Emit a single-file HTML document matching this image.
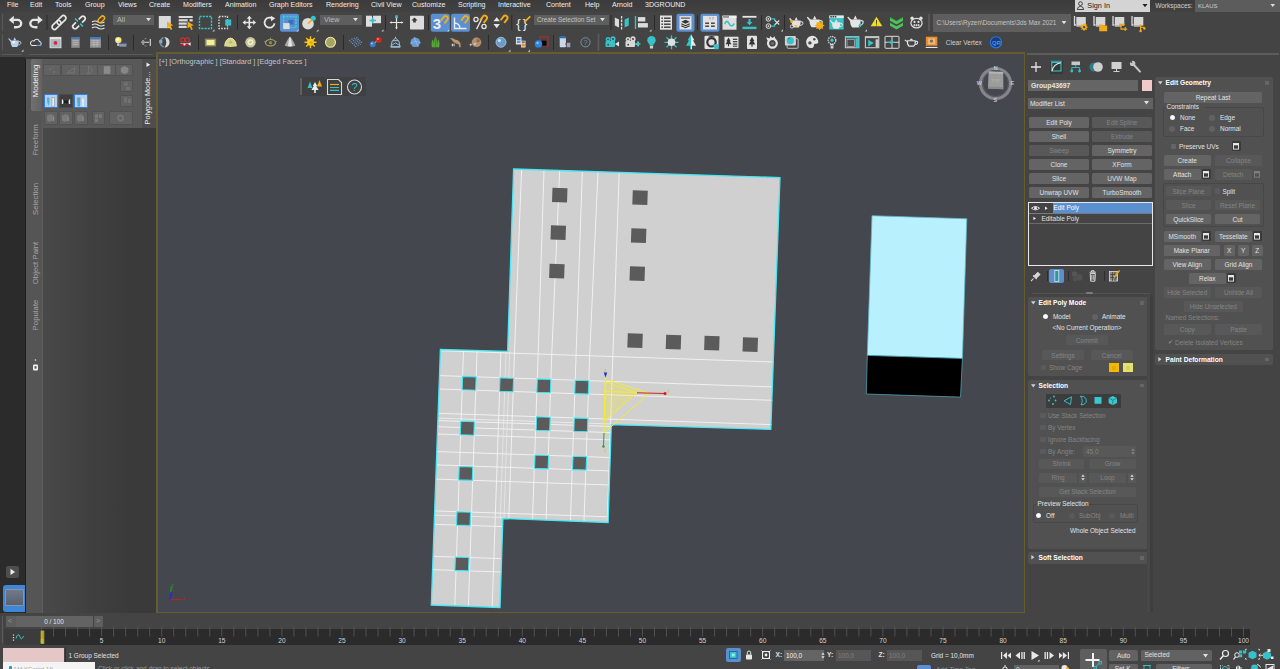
<!DOCTYPE html>
<html><head><meta charset="utf-8"><title>3ds Max</title>
<style>
html,body{margin:0;padding:0;}
body{width:1280px;height:669px;overflow:hidden;background:#444444;position:relative;font-family:"Liberation Sans",sans-serif;}
.a{position:absolute;box-sizing:border-box;}
.t{white-space:nowrap;overflow:visible;}
svg{position:absolute;overflow:visible;}
</style></head><body>

<div class="a" style="left:0px;top:0px;width:1280px;height:11.6px;background:linear-gradient(#3b3b3b,#414141);"></div>
<div class="a" style="left:0px;top:11.6px;width:1280px;height:1px;background:#2c2c2c;"></div>
<div class="a t" style="top:-0.8px;height:12px;line-height:12px;font-size:7.7px;color:#eeeeee;left:6.5px;transform:scaleX(0.92);transform-origin:left center;">File</div>
<div class="a t" style="top:-0.8px;height:12px;line-height:12px;font-size:7.7px;color:#eeeeee;left:29.5px;transform:scaleX(0.92);transform-origin:left center;">Edit</div>
<div class="a t" style="top:-0.8px;height:12px;line-height:12px;font-size:7.7px;color:#eeeeee;left:54.5px;transform:scaleX(0.92);transform-origin:left center;">Tools</div>
<div class="a t" style="top:-0.8px;height:12px;line-height:12px;font-size:7.7px;color:#eeeeee;left:84.5px;transform:scaleX(0.92);transform-origin:left center;">Group</div>
<div class="a t" style="top:-0.8px;height:12px;line-height:12px;font-size:7.7px;color:#eeeeee;left:117.5px;transform:scaleX(0.92);transform-origin:left center;">Views</div>
<div class="a t" style="top:-0.8px;height:12px;line-height:12px;font-size:7.7px;color:#eeeeee;left:148.5px;transform:scaleX(0.92);transform-origin:left center;">Create</div>
<div class="a t" style="top:-0.8px;height:12px;line-height:12px;font-size:7.7px;color:#eeeeee;left:182.5px;transform:scaleX(0.92);transform-origin:left center;">Modifiers</div>
<div class="a t" style="top:-0.8px;height:12px;line-height:12px;font-size:7.7px;color:#eeeeee;left:224.5px;transform:scaleX(0.92);transform-origin:left center;">Animation</div>
<div class="a t" style="top:-0.8px;height:12px;line-height:12px;font-size:7.7px;color:#eeeeee;left:268.5px;transform:scaleX(0.92);transform-origin:left center;">Graph Editors</div>
<div class="a t" style="top:-0.8px;height:12px;line-height:12px;font-size:7.7px;color:#eeeeee;left:325.5px;transform:scaleX(0.92);transform-origin:left center;">Rendering</div>
<div class="a t" style="top:-0.8px;height:12px;line-height:12px;font-size:7.7px;color:#eeeeee;left:370.5px;transform:scaleX(0.92);transform-origin:left center;">Civil View</div>
<div class="a t" style="top:-0.8px;height:12px;line-height:12px;font-size:7.7px;color:#eeeeee;left:411.5px;transform:scaleX(0.92);transform-origin:left center;">Customize</div>
<div class="a t" style="top:-0.8px;height:12px;line-height:12px;font-size:7.7px;color:#eeeeee;left:457.5px;transform:scaleX(0.92);transform-origin:left center;">Scripting</div>
<div class="a t" style="top:-0.8px;height:12px;line-height:12px;font-size:7.7px;color:#eeeeee;left:497.5px;transform:scaleX(0.92);transform-origin:left center;">Interactive</div>
<div class="a t" style="top:-0.8px;height:12px;line-height:12px;font-size:7.7px;color:#eeeeee;left:545.5px;transform:scaleX(0.92);transform-origin:left center;">Content</div>
<div class="a t" style="top:-0.8px;height:12px;line-height:12px;font-size:7.7px;color:#eeeeee;left:584.5px;transform:scaleX(0.92);transform-origin:left center;">Help</div>
<div class="a t" style="top:-0.8px;height:12px;line-height:12px;font-size:7.7px;color:#eeeeee;left:611.5px;transform:scaleX(0.92);transform-origin:left center;">Arnold</div>
<div class="a t" style="top:-0.8px;height:12px;line-height:12px;font-size:7.7px;color:#eeeeee;left:644.5px;transform:scaleX(0.92);transform-origin:left center;">3DGROUND</div>
<div class="a" style="left:1075px;top:0px;width:75px;height:11.6px;background:#d4d4d4;"></div>
<div class="a t" style="top:-0.3px;height:12px;line-height:12px;font-size:7.3px;color:#222;left:1087.3px;">Sign In</div>
<div class="a t" style="top:-0.2px;height:12px;line-height:12px;font-size:6.5px;color:#cfcfcf;left:1155.2px;">Workspaces:</div>
<div class="a" style="left:1195px;top:0px;width:85px;height:11.6px;background:#5c5c5c;"></div>
<div class="a t" style="top:-0.2px;height:12px;line-height:12px;font-size:5.9px;color:#cccccc;left:1198px;">KLAUS</div>
<div class="a" style="left:0px;top:12px;width:1280px;height:41px;background:#444444;"></div>
<div class="a" style="left:2px;top:14px;width:1px;height:17px;background:#5a5a5a;"></div>
<div class="a" style="left:2px;top:34px;width:1px;height:16px;background:#5a5a5a;"></div>
<div class="a" style="left:2px;top:53.6px;width:20px;height:1.6px;background:#5a5a5a;"></div>
<div class="a" style="left:29px;top:53.6px;width:124px;height:1.6px;background:#5a5a5a;"></div>
<div class="a" style="left:1027px;top:53px;width:252px;height:1.6px;background:#5c5c5c;"></div>
<div class="a" style="left:113px;top:14.5px;width:41px;height:10.5px;background:#5e5e5e;"></div>
<div class="a t" style="top:14.4px;height:12px;line-height:12px;font-size:7.2px;color:#bdbdbd;left:117px;">All</div>
<div class="a" style="left:320px;top:14.5px;width:42px;height:10.5px;background:#5e5e5e;"></div>
<div class="a t" style="top:14.4px;height:12px;line-height:12px;font-size:7.2px;color:#bdbdbd;left:324px;">View</div>
<div class="a" style="left:534px;top:14.5px;width:74.5px;height:10.5px;background:#5e5e5e;"></div>
<div class="a t" style="top:14.4px;height:12px;line-height:12px;font-size:6.4px;color:#c4c4c4;left:537px;">Create Selection Set</div>
<div class="a" style="left:933px;top:13.5px;width:137.5px;height:18px;background:#5e5e5e;"></div>
<div class="a t" style="top:17.1px;height:12px;line-height:12px;font-size:6.35px;color:#c4c4c4;left:936.5px;">C:\Users\Ryzen\Documents\3ds Max 2021</div>
<div class="a t" style="top:37.3px;height:12px;line-height:12px;font-size:6.55px;color:#d0d0d0;left:945.8px;">Clear Vertex</div>
<svg class="a" style="left:0;top:0" width="1280" height="56" viewBox="0 0 1280 56"><g transform="translate(16,22.5)"><path d="M-2.6 -2.6 H1.6 A3.6 3.6 0 0 1 1.6 4.6 H-0.8 V6" fill="none" stroke="#e6e6e6" stroke-width="2.3"/><polygon points="-7.2,-2.6 -2.2,-6.8 -2.2,1.6" fill="#e6e6e6"/></g><g transform="translate(35.5,22.5)"><g transform="scale(-1,1)"><path d="M-2.6 -2.6 H1.6 A3.6 3.6 0 0 1 1.6 4.6 H-0.8 V6" fill="none" stroke="#e6e6e6" stroke-width="2.3"/><polygon points="-7.2,-2.6 -2.2,-6.8 -2.2,1.6" fill="#e6e6e6"/></g></g><rect x="46.5" y="15.0" width="1" height="15" fill="#2a2a2a"/><g transform="translate(59,22.5)"><g transform="rotate(-45)" fill="none" stroke="#e6e6e6" stroke-width="1.7"><rect x="-8.8" y="-2.5" width="10.6" height="5" rx="2.5"/><rect x="-1.8" y="-2.5" width="10.6" height="5" rx="2.5"/></g></g><g transform="translate(79,22.5)"><g transform="rotate(-45)"><g fill="none" stroke="#e6e6e6" stroke-width="1.7"><path d="M-2 -2.3 H-5.6 A2.3 2.3 0 0 0 -5.6 2.3 H-2"/><path d="M2 -2.3 H5.6 A2.3 2.3 0 0 1 5.6 2.3 H2"/></g><path d="M0 -5.6 V-1.6 M0 1.6 V5.6" stroke="#36c2c8" stroke-width="1.5"/></g></g><g transform="translate(99,22.5)"><g fill="none" stroke="#e6e6e6" stroke-width="1.2"><path d="M-7 -0.5 Q-4 -2.5 -1 -0.5 T5.5 -0.5"/><path d="M-7 2.5 Q-4 0.5 -1 2.5 T5.5 2.5"/><path d="M-7 5.5 Q-4 3.5 -1 5.5 T5.5 5.5"/></g><g fill="none" stroke="#f2ac14" stroke-width="1.5"><rect x="-1.5" y="-5.2" width="7.6" height="4" rx="2" transform="rotate(-45 2.3 -3.2)"/></g></g><g transform="translate(165,22.5)"><rect x="-6.2" y="-6.5" width="12" height="12.2" fill="#dadada"/><polygon points="2,-1 8.3,2.8 5.6,3.5 7.3,6.8 5.8,7.5 4.2,4.2 2,6" fill="#f2ac14"/></g><g transform="translate(185.5,22.5)"><g fill="#dadada"><rect x="-6.8" y="-6.5" width="14" height="2"/><rect x="-6.8" y="-3.3" width="9" height="2.2"/><rect x="-6.8" y="0" width="8" height="2.2"/><rect x="-6.8" y="3.3" width="8" height="2.2"/><rect x="4" y="-3.3" width="3.2" height="2.2"/></g><polygon points="2,-1 8.3,2.8 5.6,3.5 7.3,6.8 5.8,7.5 4.2,4.2 2,6" fill="#f2ac14"/></g><g transform="translate(205.5,22.5)"><rect x="-6" y="-6" width="12" height="12" fill="none" stroke="#36c2c8" stroke-width="1.4" stroke-dasharray="2.2 1"/><polygon points="9,9 9,6.8 6.8,9" fill="#c8c8c8"/></g><g transform="translate(225,22.5)"><rect x="-6" y="-6" width="8.5" height="12" fill="none" stroke="#d8d8d8" stroke-width="1.3" stroke-dasharray="1.6 1.2"/><rect x="0.2" y="-3" width="6" height="6" fill="#36c2c8"/></g><rect x="237.0" y="15.0" width="1" height="15" fill="#2a2a2a"/><g transform="translate(249.3,22.5)"><path d="M0 -6.8 L2.6 -3.8 H0.8 V-0.8 H3.8 V-2.6 L6.8 0 L3.8 2.6 V0.8 H0.8 V3.8 H2.6 L0 6.8 L-2.6 3.8 H-0.8 V0.8 H-3.8 V2.6 L-6.8 0 L-3.8 -2.6 V-0.8 H-0.8 V-3.8 H-2.6Z" fill="#e6e6e6"/></g><g transform="translate(269.5,22.5)"><path d="M3.6 -3.4 A5 5 0 1 0 5 0.8" fill="none" stroke="#e6e6e6" stroke-width="1.8"/><polygon points="1.2,-6.8 5.8,-4.2 1.6,-1.2" fill="#e6e6e6"/></g><g transform="translate(289.5,22.5)"><rect x="-9.5" y="-8.7" width="19" height="18" rx="2" fill="#5a8fd2"/><rect x="-6" y="-6" width="12.5" height="11" fill="none" stroke="#2ed6d2" stroke-width="1.5" stroke-dasharray="2 1"/><rect x="-1" y="-2.6" width="5" height="4.6" fill="#3a70c0"/><rect x="-6.3" y="0.6" width="6.4" height="6" fill="#dedede"/><polygon points="9,9 9,6.8 6.8,9" fill="#c8c8c8"/></g><g transform="translate(308.5,22.5)"><circle cx="-0.5" cy="1.2" r="5.8" fill="#dcdcdc"/><path d="M-0.5 1.2 L4 -3.4" stroke="#f2ac14" stroke-width="1.6"/><circle cx="4.8" cy="-4.2" r="2.5" fill="#36c2c8"/><polygon points="10,9 10,6.8 7.8,9" fill="#c8c8c8"/></g><g transform="translate(375,22.5)"><rect x="-9" y="-6.8" width="6" height="11" fill="#dedede"/><rect x="-2" y="-6.8" width="8" height="7.5" fill="#dedede"/><path d="M-5.5 -2 H1 M-2.3 -5 V1" stroke="#36c2c8" stroke-width="1.3"/><rect x="-3.6" y="-3.3" width="2.6" height="2.6" fill="#36c2c8"/><polygon points="8.5,9 8.5,6.8 6.3,9" fill="#c8c8c8"/></g><rect x="385.0" y="15.0" width="1" height="15" fill="#2a2a2a"/><g transform="translate(396.5,22.5)"><path d="M-6.5 0 H6.5 M0 -5 V6" stroke="#e6e6e6" stroke-width="1.2"/><rect x="-1.4" y="-7.2" width="2.8" height="2.8" fill="#36c2c8"/><path d="M-7 0 l2.2 -1.3 v2.6Z M7 0 l-2.2 -1.3 v2.6Z M0 7 l-1.3 -2.2 h2.6Z" fill="#e6e6e6"/></g><g transform="translate(417,22.5)"><rect x="-7" y="-6.8" width="14" height="13.8" rx="0.8" fill="#dcdcdc"/><path d="M-2.5 -5 L0.6 -2 H-1.2 V0 H-3.8 V-2 H-5.6Z" fill="#3a3a3a"/></g><rect x="428.0" y="15.0" width="1" height="15" fill="#2a2a2a"/><g transform="translate(440.3,22.5)"><rect x="-9.5" y="-8.7" width="19" height="18" rx="2" fill="#5a8fd2"/><text x="-7.6" y="6.2" font-size="15" font-weight="bold" fill="#ececec" font-family="Liberation Sans, sans-serif">3</text><path d="M0.6000000000000001 -1.8 L3.6 -5.800000000000001 A2.3 2.3 0 0 1 7.2 -3.0 L4.2 0.8000000000000003" fill="none" stroke="#f2ac14" stroke-width="1.9"/><polygon points="9,9 9,6.8 6.8,9" fill="#c8c8c8"/></g><g transform="translate(460.5,22.5)"><rect x="-9.5" y="-8.7" width="19" height="18" rx="2" fill="#5a8fd2"/><path d="M-6 -5 V6 H6 M-6 0.5 A5.5 5.5 0 0 1 -0.5 6" fill="none" stroke="#ececec" stroke-width="1.4"/><path d="M0.6000000000000001 -1.8 L3.6 -5.800000000000001 A2.3 2.3 0 0 1 7.2 -3.0 L4.2 0.8000000000000003" fill="none" stroke="#f2ac14" stroke-width="1.9"/></g><g transform="translate(480,22.5)"><circle cx="-4" cy="-3" r="2.1" fill="none" stroke="#e6e6e6" stroke-width="1.3"/><circle cx="4" cy="4" r="2.1" fill="none" stroke="#e6e6e6" stroke-width="1.3"/><path d="M-3.4 6.6 L2.4 -5" stroke="#e6e6e6" stroke-width="1.3"/><path d="M0.10000000000000009 -2.2 L3.1 -6.2 A2.3 2.3 0 0 1 6.7 -3.4 L3.7 0.40000000000000036" fill="none" stroke="#f2ac14" stroke-width="1.9"/></g><g transform="translate(500.5,22.5)"><polygon points="-7,-1.2 -0.6,-1.2 -3.8,-5.2" fill="#e6e6e6"/><polygon points="-7,1.6 -0.6,1.6 -3.8,5.8" fill="#e6e6e6"/><path d="M0.10000000000000009 -2.2 L3.1 -6.2 A2.3 2.3 0 0 1 6.7 -3.4 L3.7 0.40000000000000036" fill="none" stroke="#f2ac14" stroke-width="1.9"/></g><rect x="511.3" y="15.0" width="1" height="15" fill="#2a2a2a"/><g transform="translate(523.5,22.5)"><text x="-7.3" y="5" font-size="13.5" fill="#ececec" font-family="Liberation Sans, sans-serif">{</text><text x="-0.8" y="5" font-size="13.5" fill="#ececec" font-family="Liberation Sans, sans-serif">}</text><path d="M0.6 -0.2 L6.8 -6.2" stroke="#f2ac14" stroke-width="1.8"/></g><rect x="610.5" y="15.0" width="1" height="15" fill="#2a2a2a"/><g transform="translate(622,22.5)"><polygon points="-7.2,-5 -3,-3 -3,5 -7.2,3" fill="#dcdcdc"/><path d="M-0.4 -6.5 V7" stroke="#dcdcdc" stroke-width="1.3" stroke-dasharray="2.6 1"/><polygon points="2.6,-3 6.8,-5 6.8,3 2.6,5" fill="#36c2c8"/></g><g transform="translate(641.5,22.5)"><path d="M-6 -6.5 V6.5" stroke="#36c2c8" stroke-width="1.4"/><rect x="-3.6" y="-5.4" width="7.4" height="4.4" fill="#dcdcdc"/><rect x="-3.6" y="0.6" width="10" height="4.4" fill="#dcdcdc"/><polygon points="10,9 10,6.8 7.8,9" fill="#c8c8c8"/></g><rect x="654.0" y="15.0" width="1" height="15" fill="#2a2a2a"/><g transform="translate(666,22.5)"><rect x="-6" y="-7" width="12" height="14.2" fill="#e2e2e2"/><g fill="#3a3a3a"><rect x="-4.6" y="-5" width="1.6" height="1.4"/><rect x="-2" y="-5" width="6.6" height="1.4"/><rect x="-4.6" y="-2" width="1.6" height="1.4"/><rect x="-2" y="-2" width="6.6" height="1.4"/><rect x="-4.6" y="1" width="1.6" height="1.4"/><rect x="-2" y="1" width="6.6" height="1.4"/><rect x="-4.6" y="4" width="1.6" height="1.4"/><rect x="-2" y="4" width="6.6" height="1.4"/></g></g><g transform="translate(685.5,22.5)"><rect x="-9" y="-8.7" width="18" height="18" rx="2" fill="#5a8fd2"/><rect x="-6" y="-6.4" width="12" height="13.4" fill="#e2e2e2"/><rect x="-4.6" y="-5" width="9" height="1.2" fill="#555"/><path d="M0 -2.8 L4.2 -0.8 L0 1.2 L-4.2 -0.8Z" fill="#333"/><path d="M-4.2 1.2 L0 3.2 L4.2 1.2 M-4.2 3.2 L0 5.2 L4.2 3.2" fill="none" stroke="#333" stroke-width="1.1"/></g><rect x="697.0" y="15.0" width="1" height="15" fill="#2a2a2a"/><g transform="translate(710,22.5)"><rect x="-9.5" y="-8.7" width="19" height="18" rx="2" fill="#5a8fd2"/><rect x="-7" y="-6.6" width="14" height="13.6" fill="#e2e2e2"/><g fill="#3a3a3a"><rect x="-4.8" y="0" width="3.8" height="1.4"/><rect x="1" y="0" width="3.8" height="1.4"/><rect x="-4.8" y="3" width="3.8" height="1.4"/><rect x="1" y="3" width="3.8" height="1.4"/></g><g fill="#bdbdbd"><rect x="-1" y="-5.4" width="2" height="2.4"/><rect x="2" y="-5.4" width="2" height="2.4"/></g></g><g transform="translate(729.5,22.5)"><rect x="-7" y="-6.8" width="14" height="14" fill="#dedede"/><rect x="-7" y="-6.8" width="14" height="2.4" fill="#f0f0f0"/><g fill="#333"><rect x="-6.2" y="-6.2" width="1.4" height="1.3"/><rect x="-4.2" y="-6.2" width="1.4" height="1.3"/><rect x="-2.2" y="-6.2" width="1.4" height="1.3"/></g><path d="M-4.8 1.6 Q-2.6 -3.6 -0.4 1.2 T4.8 1" fill="none" stroke="#36c2c8" stroke-width="1.6"/></g><g transform="translate(749.5,22.5)"><rect x="-7" y="-6.6" width="14" height="1.8" fill="#e6e6e6"/><rect x="-7" y="4.2" width="14" height="2.4" fill="#36c2c8"/><path d="M-1 -3.5 H1 V-0.6 H3 L0 2.8 L-3 -0.6 H-1Z" fill="#36c2c8"/></g><rect x="761.0" y="15.0" width="1" height="15" fill="#2a2a2a"/><g transform="translate(773,22.5)"><g fill="none" stroke="#dedede" stroke-width="1"><circle cx="-4.6" cy="-3.6" r="2.3"/><circle cx="-4.6" cy="3.6" r="2.3"/></g><circle cx="-4.6" cy="-3.6" r="0.9" fill="#dedede"/><circle cx="-4.6" cy="3.6" r="0.9" fill="#dedede"/><path d="M-2 -3.6 H1.6 V-1.6 M-2 3.6 H1.6 V1.6" fill="none" stroke="#36c2c8" stroke-width="1.3"/><path d="M2 -2 L6.2 2 M6.2 -2 L2 2" stroke="#dedede" stroke-width="1.1"/><polygon points="10,9 10,6.8 7.8,9" fill="#c8c8c8"/></g><rect x="784.0" y="15.0" width="1" height="15" fill="#2a2a2a"/><g transform="translate(796.5,22.5)"><g transform="scale(1.0)"><path d="M-4.8 -2 H4.2 Q4.6 2.4 2.4 5 H-3 Q-5.2 2.4 -4.8 -2Z" fill="#e2e2e2"/><path d="M-4.6 -0.2 L-7.4 -3.8 L-6.4 -4.4 L-3.8 -1.8Z" fill="#e2e2e2"/><path d="M4 -0.8 Q7 -1.4 6.4 1.2 Q5.8 2.8 3.6 3" fill="none" stroke="#e2e2e2" stroke-width="1"/><path d="M-2 -2 L-0.3 -5.4 L1.4 -2Z" fill="#e2e2e2"/></g><circle cx="-5" cy="-1" r="1.4" fill="#f2ac14"/><path d="M-2 3.5 q1.5 -1 2.5 0.5" stroke="#f2ac14" stroke-width="1.3" fill="none"/><circle cx="-4.6" cy="4" r="1.6" fill="none" stroke="#dedede" stroke-width="0.9"/></g><g transform="translate(816.5,22.5)"><g transform="translate(-1.5,-0.8)"><g transform="scale(1.12)"><path d="M-4.8 -2 H4.2 Q4.6 2.4 2.4 5 H-3 Q-5.2 2.4 -4.8 -2Z" fill="#e4e4e4"/><path d="M-4.6 -0.2 L-7.4 -3.8 L-6.4 -4.4 L-3.8 -1.8Z" fill="#e4e4e4"/><path d="M4 -0.8 Q7 -1.4 6.4 1.2 Q5.8 2.8 3.6 3" fill="none" stroke="#e4e4e4" stroke-width="1"/><path d="M-2 -2 L-0.3 -5.4 L1.4 -2Z" fill="#e4e4e4"/></g></g><circle cx="3.2" cy="3" r="3.6" fill="#f2ac14"/><circle cx="3.2" cy="3" r="1.4" fill="#e8e8f8"/><path d="M3.2 -1.6 V7.6 M-1.4 3 H7.8 M0 -0.2 L6.4 6.2 M6.4 -0.2 L0 6.2" stroke="#f2ac14" stroke-width="1"/></g><g transform="translate(836.5,22.5)"><rect x="-7.2" y="-7" width="14.4" height="14" fill="#36c2c8"/><rect x="-7.2" y="-7" width="14.4" height="2.6" fill="#e8e8e8"/><g fill="#333"><rect x="-6.2" y="-6.4" width="1.6" height="1.4"/><rect x="-4" y="-6.4" width="1.6" height="1.4"/><rect x="-1.8" y="-6.4" width="1.6" height="1.4"/></g><g transform="translate(0,1.6)"><g transform="scale(0.92)"><path d="M-4.8 -2 H4.2 Q4.6 2.4 2.4 5 H-3 Q-5.2 2.4 -4.8 -2Z" fill="#e6e6e6"/><path d="M-4.6 -0.2 L-7.4 -3.8 L-6.4 -4.4 L-3.8 -1.8Z" fill="#e6e6e6"/><path d="M4 -0.8 Q7 -1.4 6.4 1.2 Q5.8 2.8 3.6 3" fill="none" stroke="#e6e6e6" stroke-width="1"/><path d="M-2 -2 L-0.3 -5.4 L1.4 -2Z" fill="#e6e6e6"/></g></g></g><g transform="translate(856.5,22.5)"><g transform="translate(-0.8,-0.8)"><g transform="scale(1.15)"><path d="M-4.8 -2 H4.2 Q4.6 2.4 2.4 5 H-3 Q-5.2 2.4 -4.8 -2Z" fill="#e4e4e4"/><path d="M-4.6 -0.2 L-7.4 -3.8 L-6.4 -4.4 L-3.8 -1.8Z" fill="#e4e4e4"/><path d="M4 -0.8 Q7 -1.4 6.4 1.2 Q5.8 2.8 3.6 3" fill="none" stroke="#e4e4e4" stroke-width="1"/><path d="M-2 -2 L-0.3 -5.4 L1.4 -2Z" fill="#e4e4e4"/></g></g><path d="M4.4 -0.6 L1.6 3.4 H3.6 L2.4 6.4 L6 2 H4Z" fill="#36c2c8"/><polygon points="10.5,9 10.5,6.8 8.3,9" fill="#c8c8c8"/></g><g transform="translate(876.5,22.5)"><polygon points="0,-5.8 5.8,3.8 -5.8,3.8" fill="#f0dc28"/><rect x="-0.5" y="-2.4" width="1" height="3.6" fill="#4a4418"/><rect x="-0.5" y="2" width="1" height="1" fill="#4a4418"/></g><g transform="translate(896.5,22.5)"><path d="M-6.5 -5.2 L0 -1.6 L6.5 -5.2 V-1.8 L0 2 L-6.5 -1.8Z" fill="#4fc25a"/><path d="M-6.5 0.2 L0 3.8 L6.5 0.2 V3.2 L0 7 L-6.5 3.2Z" fill="#4fc25a"/><path d="M-6.5 -5.2 L0 -1.6 L6.5 -5.2" fill="none" stroke="#2f8a3a" stroke-width="0.8"/></g><g transform="translate(916.5,22.5)"><ellipse cx="0" cy="0.6" rx="5.6" ry="4.8" fill="none" stroke="#e2e2e2" stroke-width="1.2"/><circle cx="-4.4" cy="-4.2" r="1.7" fill="#e2e2e2"/><circle cx="4.4" cy="-4.2" r="1.7" fill="#e2e2e2"/><circle cx="-2" cy="-0.6" r="1.1" fill="#e2e2e2"/><circle cx="2" cy="-0.6" r="1.1" fill="#e2e2e2"/><path d="M-3.4 2.6 H3.4 M-2 1.6 V3.8 M0 1.6 V3.8 M2 1.6 V3.8" stroke="#e2e2e2" stroke-width="0.8"/></g><rect x="928.2" y="14.0" width="1.6" height="17" fill="#5c5c5c"/><g transform="translate(1080.5,22.5)"><path d="M-6 -6.5 V2.5 H-4.5" fill="none" stroke="#dcdcdc" stroke-width="1.3"/><rect x="-4.2" y="-5.5" width="9.5" height="8.6" fill="#d6d6d6"/><path d="M-4.2 3.6 H2" stroke="#dcdcdc" stroke-width="1"/><circle cx="3.6" cy="4.6" r="2.8" fill="#f2ac14"/><path d="M3.6 0.8 V8.4 M-0.2 4.6 H7.4 M1 2 L6.2 7.2 M6.2 2 L1 7.2" stroke="#f2ac14" stroke-width="1"/><circle cx="3.6" cy="4.6" r="1.2" fill="#4a4a6a"/></g><g transform="translate(1100,22.5)"><path d="M-6 -6.5 V2.5 H-4.5" fill="none" stroke="#dcdcdc" stroke-width="1.3"/><rect x="-4.2" y="-5.5" width="9.5" height="8.6" fill="#d6d6d6"/><path d="M-4.2 3.6 H2" stroke="#dcdcdc" stroke-width="1"/><path d="M-0.8 2 H2.4 L3.4 3 H7.2 V8.8 H-0.8Z" fill="#f2ac14"/></g><g transform="translate(1119,22.5)"><path d="M-6 -6.5 V2.5 H-4.5" fill="none" stroke="#dcdcdc" stroke-width="1.3"/><rect x="-4.2" y="-5.5" width="9.5" height="8.6" fill="#d6d6d6"/><path d="M-4.2 3.6 H2" stroke="#dcdcdc" stroke-width="1"/><rect x="0" y="1.2" width="5.6" height="1.6" fill="#f2ac14"/><path d="M2 3 V6.6 H6.2 M6.2 4.6 V8.6 M4.2 6.6 H8.2" stroke="#f2ac14" stroke-width="1.1" fill="none"/></g><g transform="translate(1138,22.5)"><path d="M-6 -6.5 V2.5 H-4.5" fill="none" stroke="#dcdcdc" stroke-width="1.3"/><rect x="-4.2" y="-5.5" width="9.5" height="8.6" fill="#d6d6d6"/><path d="M-4.2 3.6 H2" stroke="#dcdcdc" stroke-width="1"/><path d="M2.6 3 V8.4 M2.6 4.8 H6 V6.4" stroke="#f2ac14" stroke-width="1.1" fill="none"/><circle cx="2.6" cy="2.8" r="1.1" fill="#f2ac14"/><circle cx="2.6" cy="8.4" r="1.3" fill="#f2ac14"/><circle cx="6.4" cy="6" r="1.2" fill="#f2ac14"/></g><g transform="translate(15,42.3)"><g transform="scale(0.92)"><path d="M-4.8 -2 H4.2 Q4.6 2.4 2.4 5 H-3 Q-5.2 2.4 -4.8 -2Z" fill="#b8d0e8"/><path d="M-4.6 -0.2 L-7.4 -3.8 L-6.4 -4.4 L-3.8 -1.8Z" fill="#b8d0e8"/><path d="M4 -0.8 Q7 -1.4 6.4 1.2 Q5.8 2.8 3.6 3" fill="none" stroke="#b8d0e8" stroke-width="1"/><path d="M-2 -2 L-0.3 -5.4 L1.4 -2Z" fill="#b8d0e8"/></g><path d="M-2.6 -0.8 Q-1 -1.8 0.6 -0.6 Q-0.4 1.6 -2.4 1Z" fill="#f4f8ff"/><polygon points="8.5,9.5 8.5,7.3 6.3,9.5" fill="#c8c8c8"/></g><g transform="translate(36,42.3)"><g transform="scale(0.86)"><path d="M-4.6 3.8 H4.2 A2.4 2.4 0 0 0 4 -0.9 A3.3 3.3 0 0 0 -2.2 -1.6 A2.8 2.8 0 0 0 -4.6 3.8Z" fill="none" stroke="#e8e8e8" stroke-width="1.2"/><path d="M0.5 3.8 H4.2 A2.4 2.4 0 0 0 5 0.4" fill="none" stroke="#6a9ee0" stroke-width="1.2"/></g></g><g transform="translate(55.5,42.3)"><rect x="-5.5" y="-5" width="11" height="10.5" fill="#aab6c4"/><rect x="-5.5" y="-5" width="11" height="1.8" fill="#e6e6e6"/><rect x="-5.5" y="-5" width="11" height="10.5" fill="none" stroke="#e6e6e6" stroke-width="0.8"/><circle cx="0" cy="0.6" r="1.9" fill="#d82a2a"/></g><g transform="translate(75.5,42.3)"><rect x="-4.2" y="-5" width="8.4" height="10.5" fill="#8e8e8e"/><rect x="-4.2" y="-5" width="8.4" height="1.6" fill="#3c78c8"/><path d="M-3 -1.6 H3 M-3 0.4 H3 M-3 2.4 H3" stroke="#b8b8b8" stroke-width="0.9"/></g><g transform="translate(95.5,42.3)"><rect x="-5.5" y="-5" width="11" height="10.5" fill="#8e8e8e"/><rect x="-5.5" y="-5" width="11" height="1.6" fill="#3c78c8"/><path d="M-4.4 -1.6 H4.4 M-4.4 0.4 H4.4 M-4.4 2.4 H4.4 M-1.6 -2.6 V4.6 M1.6 -2.6 V4.6" stroke="#b8b8b8" stroke-width="0.9"/></g><rect x="108.0" y="34.8" width="1" height="15" fill="#2a2a2a"/><g transform="translate(120.5,42.3)"><circle cx="-2.2" cy="-2.2" r="3.2" fill="#f0e878"/><circle cx="-2.8" cy="-2.8" r="1.4" fill="#fffce0"/><rect x="-3.4" y="1" width="2.4" height="2.6" fill="#c8c8c8"/><rect x="-1" y="0.6" width="7" height="3.8" fill="#8a96a8"/><rect x="-1" y="0.6" width="7" height="1" fill="#3c5a98"/></g><rect x="133.0" y="34.8" width="1" height="15" fill="#2a2a2a"/><g transform="translate(145.5,42.3)"><path d="M-4 0 H3.5 M-2.4 -2.4 V2.6" stroke="#b8b8b8" stroke-width="1.2"/><circle cx="-2.4" cy="0" r="1.8" fill="#9a9a9a"/><rect x="4.2" y="-3.4" width="1.2" height="7" fill="#d4d4d4"/><path d="M-1 -3.6 l2 0 M-1 3.6 l2 0" stroke="#9a9a9a" stroke-width="0.8"/></g><g transform="translate(165,42.3)"><path d="M-0.6 -5.2 A5.2 5.2 0 0 1 -0.6 5.2 A8 8 0 0 0 -0.6 -5.2Z" fill="#d8d8d8"/><path d="M-1.4 -4.8 A5.2 5.2 0 0 0 -1.4 4.8" fill="none" stroke="#7a8a9a" stroke-width="1.6"/><rect x="-5.8" y="-2.4" width="3.2" height="3.4" fill="#88a8c8"/></g><g transform="translate(185,42.3)"><g transform="scale(0.85)"><circle cx="-2.6" cy="-2.8" r="2.5" fill="none" stroke="#d83030" stroke-width="1.2"/><circle cx="2.6" cy="-2.8" r="2.5" fill="none" stroke="#d83030" stroke-width="1.2"/><rect x="-5.2" y="-0.2" width="9.4" height="4.8" fill="#b02020"/><path d="M-5.4 1.4 H5.2" stroke="#50c8d0" stroke-width="1"/><circle cx="-0.6" cy="2.6" r="1.3" fill="#e8e8e8"/><polygon points="4.2,1 6.6,0 6.6,4 4.2,3" fill="#e8e8e8"/></g></g><rect x="198.0" y="34.8" width="1" height="15" fill="#2a2a2a"/><g transform="translate(210.5,42.3)"><rect x="-5.6" y="-3.8" width="11.2" height="8" rx="0.8" fill="#8a8868"/><rect x="-4" y="-2.4" width="8" height="5.2" fill="#f4f098"/></g><g transform="translate(230.5,42.3)"><path d="M-5.8 4 A5.8 8.2 0 0 1 5.8 4 Q0 5.4 -5.8 4Z" fill="#d8d488"/><path d="M-5.8 4 A5.8 8.2 0 0 1 5.8 4" fill="none" stroke="#f0eca8" stroke-width="0.9"/><path d="M-2 1 L0 -2 L2.4 1Z" fill="#b8b47a"/></g><g transform="translate(250.5,42.3)"><circle cx="0" cy="0" r="5.2" fill="#c8c4a0"/><circle cx="0" cy="0" r="3" fill="#f0ecc8"/><circle cx="0" cy="0" r="1.2" fill="#c8c4a0"/></g><g transform="translate(270.5,42.3)"><ellipse cx="0" cy="0.4" rx="5" ry="3.2" fill="none" stroke="#a8a268" stroke-width="1.2"/><circle cx="0" cy="0.4" r="1.7" fill="#8a8650"/><path d="M-6.2 -1 l1.6 1 M6.2 -1 l-1.6 1 M0 -4.6 v1.6" stroke="#a8a268" stroke-width="0.9"/></g><g transform="translate(290,42.3)"><path d="M0 -5.6 Q1.4 -5.2 5.4 3.2 Q0 5.6 -5.4 3.2 Q-1.4 -5.2 0 -5.6Z" fill="#a8a8a8"/><path d="M0 -5.6 Q1 -5 2 3.8 Q0 4.4 -2 3.8 Q-1 -5 0 -5.6Z" fill="#e6e6e6"/></g><g transform="translate(310.5,42.3)"><g stroke="#f2c410" stroke-width="1.4"><path d="M0 -6 V6 M-6 0 H6 M-4.3 -4.3 L4.3 4.3 M4.3 -4.3 L-4.3 4.3"/></g><circle cx="0" cy="0" r="3.5" fill="#f8cc18"/><circle cx="0.6" cy="0.4" r="1.6" fill="#f0a410"/></g><g transform="translate(330.5,42.3)"><circle cx="0" cy="0" r="5" fill="#a8a468"/><circle cx="0" cy="0" r="5" fill="none" stroke="#f0eca0" stroke-width="1.1"/></g><rect x="343.0" y="34.8" width="1" height="15" fill="#2a2a2a"/><g transform="translate(355.5,42.3)"><g stroke="#6a98c8" stroke-width="1.2" stroke-dasharray="1.3 0.9"><path d="M-6.4 -2.4 L0.6 4.6 M-4 -3.6 L3 3.4 M-1.6 -4.4 L5.2 2.4 M0.8 -5 L6.6 0.8"/></g></g><g transform="translate(375.5,42.3)"><circle cx="-2.8" cy="2" r="3" fill="#3a78c8"/><circle cx="-3.6" cy="1.2" r="1.1" fill="#9ac0f0"/><circle cx="3.2" cy="-2.4" r="2.9" fill="#d02820"/><circle cx="2.4" cy="-3.2" r="1" fill="#f08878"/><path d="M-0.8 0.4 L1 -1" stroke="#c8c8c8" stroke-width="1"/></g><g transform="translate(395.5,42.3)"><path d="M-4.6 4.6 L-3.2 -1.6 H3.2 L4.6 4.6Z" fill="none" stroke="#9cc4e0" stroke-width="1"/><path d="M-3.8 3 L0 0.6 L3.8 3 M-2 -1.6 a2 2.2 0 0 1 4 0 M0 -5.6 v1.6" fill="none" stroke="#9cc4e0" stroke-width="0.9"/><rect x="-4.8" y="4" width="9.6" height="1.2" fill="#9cc4e0"/></g><g transform="translate(415.5,42.3)"><path d="M-4.6 -2.6 L-1 -5 L3.4 -3.6 L5 0.4 L2.6 4.4 L-2.6 4.6 L-5 1Z" fill="#6a9cd0"/><path d="M-1 -5 L0 -1 L-5 1 M0 -1 L5 0.4 M0 -1 L2.6 4.4" stroke="#9cc0e8" stroke-width="0.7" fill="none"/></g><g transform="translate(435.5,42.3)"><path d="M-3.6 5 Q-4.6 -1 -2.4 -3 Q-1.6 0 -1.4 5Z M-1.4 5 Q-1.8 -4 0 -6 Q1.8 -4 1.4 5Z M1.4 5 Q1.6 0 2.6 -3 Q4.6 -1 3.6 5Z" fill="#58a838"/><path d="M0 -6 V5" stroke="#3a7a20" stroke-width="0.6"/></g><g transform="translate(455.5,42.3)"><path d="M-5.6 -4.4 Q-2 -4.6 0 -2.6 Q3.6 -2.4 5 1.2 L5.2 5 L3.8 5 L3 2 Q0 1.4 -2 -0.4 Q-3.6 -2.6 -5.6 -4.4Z" fill="#b89868"/><path d="M-4 2.6 h2 M-3 1.4 v2.6 M-1.4 1.4 v2.6" stroke="#e8e8e8" stroke-width="0.8"/></g><g transform="translate(475.5,42.3)"><circle cx="1" cy="0" r="4.8" fill="#b09070"/><circle cx="2.6" cy="-1.6" r="1.6" fill="#8a6a4a"/><circle cx="-0.6" cy="1.6" r="1.2" fill="#d8c0a0"/><path d="M-6 2.4 h2.6 M-4.8 1.2 v2.6" stroke="#d0d0d0" stroke-width="0.8"/></g><rect x="488.0" y="34.8" width="1" height="15" fill="#2a2a2a"/><g transform="translate(501,42.3)"><circle cx="0" cy="0" r="5" fill="#6a9cc8"/><circle cx="0" cy="0" r="5" fill="none" stroke="#a8cce8" stroke-width="0.8"/><circle cx="-1.6" cy="-1.8" r="1.6" fill="#c8e0f4"/><polygon points="9.5,9.5 9.5,7.3 7.3,9.5" fill="#c8c8c8"/></g><g transform="translate(520.5,42.3)"><rect x="-4.6" y="-5.4" width="5.6" height="7.6" fill="#e0e0e0"/><rect x="-3.6" y="-4" width="3.6" height="2" fill="#3a78c8"/><rect x="-3.6" y="-1" width="3.6" height="1.4" fill="#3a78c8"/><rect x="0.6" y="-1.6" width="4.4" height="6.8" fill="#e0e0e0"/><rect x="1.4" y="1.4" width="2.8" height="2.8" fill="#f08a18"/><rect x="1.4" y="-0.8" width="2.8" height="1.2" fill="#444"/><polygon points="9.5,9.5 9.5,7.3 7.3,9.5" fill="#c8c8c8"/></g><g transform="translate(540.5,42.3)"><rect x="-0.6" y="-5.4" width="8.2" height="9" fill="none" stroke="#c02828" stroke-width="0.9"/><rect x="1" y="-1.6" width="5" height="5" fill="#080808"/><circle cx="-2" cy="1.6" r="3.7" fill="#2a88e0"/><circle cx="-3" cy="0.6" r="1.2" fill="#8ac4f8"/></g><rect x="553.0" y="34.8" width="1" height="15" fill="#2a2a2a"/><g transform="translate(564.5,42.3)"><rect x="-4.8" y="-5.6" width="6.2" height="10.6" rx="0.8" fill="#c8d8e8"/><rect x="-4.8" y="-5.6" width="6.2" height="1.6" fill="#2a68c0"/><rect x="2.2" y="0.4" width="3.6" height="4.6" rx="0.6" fill="#8aa8c8"/><circle cx="1.6" cy="1.8" r="1" fill="#d83030"/></g><g transform="translate(585.5,42.3)"><circle cx="0" cy="0" r="4.6" fill="none" stroke="#7890a8" stroke-width="1"/><text x="-1.9" y="2.5" font-size="7" fill="#7890a8" font-family="Liberation Sans, sans-serif">?</text></g><rect x="597.7" y="33.8" width="1.6" height="17" fill="#5c5c5c"/><g transform="translate(612,42.3)"><rect x="-6.5" y="-1.2" width="9.5" height="6" rx="1" fill="#36c2c8"/><circle cx="-4" cy="-3" r="2.3" fill="#36c2c8"/><circle cx="1" cy="-3.4" r="2.6" fill="#36c2c8"/><polygon points="3,1.6 7,-0.8 7,4.2" fill="#e8e8e8"/><circle cx="-4" cy="-3" r="0.9" fill="#444"/><circle cx="1" cy="-3.4" r="1" fill="#444"/><circle cx="-3.8" cy="2.4" r="0.9" fill="#444"/></g><g transform="translate(632,42.3)"><rect x="-6.5" y="-1.2" width="9.5" height="6" rx="1" fill="#d8d8d8"/><circle cx="-4" cy="-3" r="2.3" fill="#d8d8d8"/><circle cx="1" cy="-3.4" r="2.6" fill="#d8d8d8"/><polygon points="3,1.6 7,-0.8 7,4.2" fill="#e8e8e8"/><circle cx="-4" cy="-3" r="0.9" fill="#444"/><circle cx="1" cy="-3.4" r="1" fill="#444"/><circle cx="-3.8" cy="2.4" r="0.9" fill="#444"/><path d="M3.6 1.6 H8.4 M6 -0.8 V4" stroke="#36c2c8" stroke-width="1.6"/></g><g transform="translate(651.5,42.3)"><circle cx="0" cy="-2" r="4.2" fill="#36c2c8"/><path d="M-2 1.6 H2 V3.4 H-2Z" fill="#36c2c8"/><rect x="-1.6" y="3.6" width="3.2" height="2.6" fill="#d0d0d0"/></g><g transform="translate(671.5,42.3)"><g stroke="#36c2c8" stroke-width="1.3"><path d="M0 -7 V7 M-7 0 H7 M-5 -5 L5 5 M5 -5 L-5 5"/></g><circle cx="0" cy="0" r="3.8" fill="#e0e0e0"/></g><g transform="translate(691,42.3)"><path d="M0 -8 L-3.4 -2 H-2 L-5 3.4 H-1 V7 H0Z" fill="#36c2c8"/><path d="M0 -8 L3.4 -2 H2 L5 3.4 H1 V7 H0Z" fill="#e4e4e4"/></g><g transform="translate(711.5,42.3)"><rect x="-7" y="-6.6" width="14" height="13.4" rx="1" fill="#e2e2e2"/><circle cx="0" cy="0" r="4.2" fill="none" stroke="#333" stroke-width="2.2"/><path d="M-3 -5 q3 -1.6 6 0" stroke="#333" stroke-width="1.1" fill="none"/><polygon points="1.4,2 7,2 7,7 3,7" fill="#36c2c8"/></g><g transform="translate(731.5,42.3)"><rect x="-7" y="-5.6" width="14" height="11.4" fill="#e2e2e2"/><g transform="translate(-3,0) scale(0.72)"><path d="M0 -6.5 L3 -1.5 H1.6 L4 2.8 H0.7 V5.5 H-0.7 V2.8 H-4 L-1.6 -1.5 H-3Z" fill="#333"/></g><g fill="#333"><rect x="1.4" y="-3.6" width="4.4" height="1.2"/><rect x="1.4" y="-1.2" width="4.4" height="1.2"/><rect x="1.4" y="1.2" width="4.4" height="1.2"/><rect x="1.4" y="3.4" width="4.4" height="1"/></g></g><g transform="translate(752,42.3)"><rect x="-5" y="-6.6" width="10" height="13.4" rx="0.8" fill="#e2e2e2"/><g transform="translate(0,0) scale(0.8)"><path d="M0 -6.5 L3 -1.5 H1.6 L4 2.8 H0.7 V5.5 H-0.7 V2.8 H-4 L-1.6 -1.5 H-3Z" fill="#333"/></g></g><g transform="translate(772,42.3)"><circle cx="0.4" cy="1" r="4.4" fill="none" stroke="#e4e4e4" stroke-width="2.2"/><path d="M-4.6 -1.8 L-5.8 -5 L-2.6 -3.8 L-1.6 -6.4 L0.6 -4 L2.4 -6 L3.6 -3.2" fill="#e4e4e4"/><circle cx="0.4" cy="1" r="1.6" fill="#6a6a6a"/></g><g transform="translate(791.5,42.3)"><rect x="-4.4" y="-3.6" width="11" height="9.6" rx="1" fill="none" stroke="#bdbdbd" stroke-width="1"/><rect x="-6.6" y="-6.4" width="11" height="9.6" rx="1" fill="#d0d0d0"/><circle cx="-1.2" cy="-1.6" r="3.6" fill="#36c2c8"/><path d="M-3.4 -3.4 l1.4 -0.6" stroke="#1a6a70" stroke-width="1"/></g><g transform="translate(812.5,42.3)"><path d="M-6.2 0.6 A6 6 0 0 1 5.6 -1.6 Q6.6 1.8 3 1.4 Q1 1.4 1.4 3.4 Q1.2 6 -2 5.8 A6 6 0 0 1 -6.2 0.6Z" fill="#e4e4e4"/><circle cx="-2.6" cy="0.6" r="1.7" fill="#4a4a4a"/><circle cx="1.8" cy="-3" r="1.2" fill="#4a4a4a"/></g><g transform="translate(832,42.3)"><circle cx="0" cy="-2" r="3.8" fill="none" stroke="#d8d8d8" stroke-width="1.3" stroke-dasharray="1.4 0.8"/><circle cx="0" cy="-2" r="1.7" fill="#36c2c8"/><path d="M-1.8 1.6 H1.8 V3.2 H-1.8Z" fill="#d8d8d8"/><rect x="-1.4" y="3.8" width="2.8" height="2.4" fill="#d8d8d8"/></g><g transform="translate(852,42.3)"><rect x="-6.6" y="-5.6" width="13.4" height="11" fill="none" stroke="#c8c8c8" stroke-width="1.1"/><rect x="-6.6" y="-5.6" width="13.4" height="1.6" fill="#36c2c8"/><rect x="3.4" y="-4" width="3.4" height="9.4" fill="#36c2c8"/><rect x="-5" y="-3" width="7.4" height="7.2" fill="#4a4a4a" stroke="#bdbdbd" stroke-width="0.7"/></g><g transform="translate(872,42.3)"><rect x="-6.6" y="-5.6" width="13.4" height="11" fill="none" stroke="#c8c8c8" stroke-width="1.1"/><rect x="-6.6" y="-5.6" width="13.4" height="1.4" fill="#c8c8c8"/><rect x="3.6" y="-3" width="3" height="8" fill="#c8c8c8"/><polygon points="-3.8,-2.6 1.8,0.8 -3.8,4.2" fill="#36c2c8"/></g><g transform="translate(892,42.3)"><rect x="-7" y="-6" width="14" height="12" rx="0.8" fill="none" stroke="#dcdcdc" stroke-width="1"/><path d="M0 -6 V6 M-7 0 H7" stroke="#dcdcdc" stroke-width="1"/><polygon points="-1.6,-2 3,0 -1.6,2" fill="#36c2c8"/><path d="M-5 0 H-1" stroke="#36c2c8" stroke-width="1.2"/></g><g transform="translate(911.5,42.3)"><g fill="none" stroke="#e6e6e6" stroke-width="1.1"><path d="M-3.8 -1.6 H3.6 Q4.4 1.8 2.2 3.8 H-2.6 Q-4.8 1.8 -3.8 -1.6Z"/><path d="M-4 -0.6 L-6.8 -2.4 M3.8 -0.8 Q6.8 -1.4 6 1 Q5.4 2.2 3.6 2.2 M-1.4 -1.8 Q-0.2 -4.6 1 -1.8"/></g></g><g transform="translate(931.5,42.3)"><rect x="-5.6" y="-5.6" width="11.4" height="9" fill="#e89030"/><rect x="-3.4" y="-4" width="7" height="6" fill="#f0b878"/><circle cx="0" cy="-1.2" r="1.6" fill="#7a6a5a"/><rect x="-5.8" y="4.6" width="11.8" height="1.1" fill="#e6e6e6"/></g><g transform="translate(996,42.3)"><circle cx="0" cy="0" r="5.6" fill="#1a3a7a"/><circle cx="0" cy="0" r="5.6" fill="none" stroke="#2a78e0" stroke-width="1.1"/><text x="-4" y="2.3" font-size="6" font-weight="bold" fill="#3a98f8" font-family="Liberation Sans, sans-serif">QR</text></g><polygon points="146.1,18.0 150.9,18.0 148.5,21.3" fill="#e0e0e0"/><polygon points="353.1,18.0 357.9,18.0 355.5,21.3" fill="#e0e0e0"/><polygon points="600.1,18.0 604.9,18.0 602.5,21.3" fill="#e0e0e0"/><polygon points="1061.6,21.0 1066.4,21.0 1064,24.3" fill="#e0e0e0"/><circle cx="1080.5" cy="3.6" r="1.9" fill="none" stroke="#222" stroke-width="0.8"/><path d="M1077.3 9.5 q0.4 -3.2 3.2 -3.2 q2.8 0 3.2 3.2Z" fill="none" stroke="#222" stroke-width="0.8"/><polygon points="1142.5,4 1147.5,4 1145,7.2" fill="#222"/><polygon points="1270.5,4 1275,4 1272.7,7" fill="#e0e0e0"/></svg>
<div class="a" style="left:0px;top:57px;width:25px;height:556px;background:#2b2b2b;"></div>
<div class="a" style="left:25px;top:57px;width:17px;height:556px;background:#555555;"></div>
<div class="a" style="left:42px;top:57px;width:114px;height:556px;background:linear-gradient(90deg,#494949,#3f3f3f 45%,#3a3a3a 80%);"></div>
<div class="a" style="left:24.5px;top:57px;width:1px;height:556px;background:#1e1e1e;"></div>
<div class="a" style="left:41.5px;top:128px;width:0.8px;height:485px;background:#5e5e5e;"></div>
<div class="a" style="left:25px;top:57px;width:131px;height:1.5px;background:#353535;"></div>
<div class="a" style="left:30.5px;top:59px;width:11.5px;height:51.5px;background:linear-gradient(90deg,#707070,#626262);border-radius:2px 0 0 2px;"></div>
<div class="a" style="left:42px;top:58.5px;width:100px;height:69px;background:#595959;"></div>
<div class="a" style="left:142px;top:58.5px;width:14px;height:69px;background:#4e4e4e;"></div>
<div class="a t" style="left:-24px;top:75px;width:120px;height:12px;line-height:12px;text-align:center;font-size:8.1px;color:#ececec;transform:rotate(-90deg);">Modeling</div>
<div class="a t" style="left:-24.200000000000003px;top:133.8px;width:120px;height:12px;line-height:12px;text-align:center;font-size:7.8px;color:#a6a6a6;transform:rotate(-90deg);">Freeform</div>
<div class="a t" style="left:-24.200000000000003px;top:192.6px;width:120px;height:12px;line-height:12px;text-align:center;font-size:7.8px;color:#a6a6a6;transform:rotate(-90deg);">Selection</div>
<div class="a t" style="left:-24.200000000000003px;top:256.7px;width:120px;height:12px;line-height:12px;text-align:center;font-size:7.8px;color:#a6a6a6;transform:rotate(-90deg);">Object Paint</div>
<div class="a t" style="left:-24.200000000000003px;top:309.4px;width:120px;height:12px;line-height:12px;text-align:center;font-size:7.8px;color:#a6a6a6;transform:rotate(-90deg);">Populate</div>
<div class="a t" style="left:88.30000000000001px;top:92px;width:120px;height:12px;line-height:12px;text-align:center;font-size:7.3px;color:#ececec;transform:rotate(-90deg);">Polygon Mode...</div>
<svg class="a" style="left:146px;top:62px" width="6" height="6"><polygon points="0.5,0.4 0.5,5 4.2,2.7" fill="#f0f0f0"/></svg>
<div class="a" style="left:43.2px;top:64px;width:18.2px;height:12.4px;background:#626262;border:1px solid #525252;border-radius:1px;"></div>
<div class="a" style="left:61.4px;top:64px;width:18.2px;height:12.4px;background:#626262;border:1px solid #525252;border-radius:1px;"></div>
<div class="a" style="left:79.4px;top:64px;width:18.2px;height:12.4px;background:#626262;border:1px solid #525252;border-radius:1px;"></div>
<div class="a" style="left:97.4px;top:64px;width:18.2px;height:12.4px;background:#626262;border:1px solid #525252;border-radius:1px;"></div>
<div class="a" style="left:115.4px;top:64px;width:17.4px;height:12.4px;background:#626262;border:1px solid #525252;border-radius:1px;"></div>
<div class="a" style="left:119.7px;top:79.7px;width:13.5px;height:12.4px;background:#626262;border:1px solid #525252;border-radius:1px;"></div>
<div class="a" style="left:119.7px;top:94.8px;width:13.5px;height:12.4px;background:#626262;border:1px solid #525252;border-radius:1px;"></div>
<div class="a" style="left:43.6px;top:94.2px;width:14.4px;height:13.8px;background:#b4d0ee;border:1.2px solid #2b7fe6;border-radius:1px;"></div>
<div class="a" style="left:59px;top:94.2px;width:14.2px;height:13.8px;background:#3e3e3e;border:1px solid #4a4a4a;border-radius:1px;"></div>
<div class="a" style="left:73.8px;top:94.2px;width:14.4px;height:13.8px;background:#b4d0ee;border:1.2px solid #2b7fe6;border-radius:1px;"></div>
<div class="a" style="left:43.6px;top:111.4px;width:14.4px;height:13.2px;background:#626262;border:1px solid #525252;border-radius:1px;"></div>
<div class="a" style="left:58.8px;top:111.4px;width:14.2px;height:13.2px;background:#626262;border:1px solid #525252;border-radius:1px;"></div>
<div class="a" style="left:73.8px;top:111.4px;width:14px;height:13.2px;background:#626262;border:1px solid #525252;border-radius:1px;"></div>
<div class="a" style="left:91.7px;top:111.4px;width:13.8px;height:13.2px;background:#626262;border:1px solid #525252;border-radius:1px;"></div>
<div class="a" style="left:108.6px;top:111.4px;width:24.8px;height:13.2px;background:#626262;border:1px solid #525252;border-radius:1px;"></div>
<svg class="a" style="left:42px;top:58px" width="100" height="70" viewBox="0 0 100 70"><g fill="#747474" stroke="none"><circle cx="8" cy="11" r="1"/><circle cx="12" cy="14" r="1"/><circle cx="11" cy="9.5" r="0.8"/></g><path d="M25 15 L33 9.5 L32 15Z" fill="none" stroke="#747474" stroke-width="1"/><path d="M46 8.5 Q51 9 49.8 13.5 Q48.6 16.5 45.6 15.8 Q48 12.5 46 8.5Z" fill="none" stroke="#747474" stroke-width="1"/><rect x="61.8" y="8.2" width="6.6" height="7.6" fill="#8a8a8a"/><path d="M82.6 8 L86.4 10 V14.2 L82.6 16.2 L78.8 14.2 V10Z" fill="#868686"/><g fill="#707070"><rect x="82" y="24.5" width="4" height="3"/><rect x="84" y="29" width="4" height="3"/><rect x="82" y="39.5" width="3" height="5"/><rect x="86" y="41" width="3" height="4"/></g><path d="M5 39.5 Q4.6 45 6.8 48 Q8 44 7.4 39.5Z" fill="#58b0d8"/><rect x="10" y="39.6" width="2.2" height="9" fill="#f0f0f0" stroke="#8a8a8a" stroke-width="0.5"/><path d="M20.5 41.6 V46 M27.5 41.6 V46 M20.5 43.8 H27.5" stroke="#f0f0f0" stroke-width="1.3"/><rect x="21.6" y="42.4" width="4.8" height="2.8" fill="#1c1c1c"/><path d="M35 39.6 H38.4 L38 48.4 H35.6Z" fill="#58a8c8"/><path d="M41 42 V48.4" stroke="#f4f4f4" stroke-width="1.3"/><polygon points="39.8,42.4 42.2,42.4 41,40" fill="#f4f4f4"/><g fill="#7a7a7a"><path d="M5 57.4 L9 56 L11.4 57.4 V62.6 L7.4 64 L5 62.6Z"/><path d="M20 57.4 L24 56 L26.4 57.4 V62.6 L22.4 64 L20 62.6Z"/><path d="M35 57.4 L39 56 L41.4 57.4 V62.6 L37.4 64 L35 62.6Z"/><rect x="53" y="56.4" width="3" height="3.4"/><rect x="57" y="56.4" width="3" height="3.4"/><rect x="53" y="60.6" width="3" height="3.4"/></g><g fill="#8c8c8c"><rect x="11" y="58.6" width="1.2" height="4.4"/><rect x="25.6" y="58.6" width="1.2" height="4.4"/><rect x="40.4" y="58.6" width="1.2" height="4.4"/></g><circle cx="78.6" cy="60" r="2.6" fill="none" stroke="#767676" stroke-width="1.6"/></svg>
<div class="a" style="left:156px;top:52px;width:869px;height:561.6px;background:#44474d;border:2px solid #675b30;border-bottom-width:2.4px;border-right-width:1.3px;"></div>
<div class="a t" style="top:55.6px;height:12px;line-height:12px;font-size:7.3px;color:#c4c4c4;left:159px;">[+] [Orthographic ] [Standard ] [Edged Faces ]</div>
<svg class="a" style="left:0;top:0" width="1280" height="669" viewBox="0 0 1280 669">
<polygon points="513.6,169.0 780.0,177.6 770.8,429.4 611.3,424.7 608.1,522.5 502.9,518.5 500.0,607.5 431.3,605.0 440.4,349.5 507.6,351.4" fill="#d0d0d0"/>
<polyline points="521.6,169.3 514.5,352.0 508.8,519.1" fill="none" stroke="#f4f4f4" stroke-width="0.9" opacity="1"/>
<polyline points="544.0,170.0 538.2,352.8 532.5,519.9" fill="none" stroke="#f4f4f4" stroke-width="0.9" opacity="1"/>
<polyline points="559.7,170.6 551.8,353.3 546.1,520.4" fill="none" stroke="#f4f4f4" stroke-width="0.9" opacity="1"/>
<polyline points="582.3,171.3 576.1,354.1 570.4,521.2" fill="none" stroke="#f4f4f4" stroke-width="0.9" opacity="1"/>
<polyline points="598.0,171.9 589.7,354.6 584.0,521.7" fill="none" stroke="#f4f4f4" stroke-width="0.9" opacity="1"/>
<polyline points="619.2,172.6 612.9,355.4 607.2,522.5" fill="none" stroke="#f4f4f4" stroke-width="0.9" opacity="1"/>
<line x1="463.5" y1="350.3" x2="454.8" y2="606.0" stroke="#f4f4f4" stroke-width="0.9" opacity="1"/>
<line x1="477.1" y1="350.7" x2="468.4" y2="606.4" stroke="#f4f4f4" stroke-width="0.9" opacity="1"/>
<line x1="500.9" y1="351.6" x2="492.2" y2="607.2" stroke="#f4f4f4" stroke-width="0.9" opacity="1"/>
<line x1="506.0" y1="351.7" x2="500.3" y2="518.8" stroke="#f4f4f4" stroke-width="0.7" opacity="0.8"/>
<line x1="509.7" y1="351.9" x2="504.0" y2="519.0" stroke="#f4f4f4" stroke-width="0.7" opacity="0.8"/>
<line x1="439.5" y1="375.6" x2="772.9" y2="386.9" stroke="#f4f4f4" stroke-width="0.9" opacity="1"/>
<line x1="439.1" y1="389.0" x2="772.4" y2="400.3" stroke="#f4f4f4" stroke-width="0.9" opacity="1"/>
<line x1="438.2" y1="413.3" x2="771.6" y2="424.6" stroke="#f4f4f4" stroke-width="0.9" opacity="1"/>
<line x1="438.0" y1="420.6" x2="611.4" y2="426.5" stroke="#f4f4f4" stroke-width="0.9" opacity="1"/>
<line x1="437.8" y1="426.7" x2="611.2" y2="432.6" stroke="#f4f4f4" stroke-width="0.9" opacity="1"/>
<line x1="437.5" y1="434.0" x2="610.9" y2="439.9" stroke="#f4f4f4" stroke-width="0.9" opacity="1"/>
<line x1="436.9" y1="451.6" x2="610.3" y2="457.5" stroke="#f4f4f4" stroke-width="0.9" opacity="1"/>
<line x1="436.5" y1="464.9" x2="609.9" y2="470.9" stroke="#f4f4f4" stroke-width="0.9" opacity="1"/>
<line x1="436.0" y1="479.1" x2="609.4" y2="485.0" stroke="#f4f4f4" stroke-width="0.9" opacity="1"/>
<line x1="434.9" y1="510.9" x2="608.3" y2="516.8" stroke="#f4f4f4" stroke-width="0.9" opacity="1"/>
<line x1="434.4" y1="524.3" x2="502.8" y2="526.6" stroke="#f4f4f4" stroke-width="0.9" opacity="1"/>
<line x1="433.4" y1="556.3" x2="501.7" y2="558.6" stroke="#f4f4f4" stroke-width="0.9" opacity="1"/>
<line x1="432.9" y1="569.7" x2="501.2" y2="572.0" stroke="#f4f4f4" stroke-width="0.9" opacity="1"/>
<line x1="440.4" y1="350.7" x2="773.7" y2="362.0" stroke="#f4f4f4" stroke-width="0.9" opacity="1"/>
<line x1="438.1" y1="418.1" x2="611.5" y2="424.0" stroke="#f4f4f4" stroke-width="0.8" opacity="0.9"/>
<line x1="434.8" y1="515.2" x2="503.1" y2="517.5" stroke="#f4f4f4" stroke-width="0.8" opacity="0.9"/>
<polygon points="552.5,187.7 567.5,188.2 567.0,202.5 552.0,202.0" fill="#5b5b5b"/>
<polygon points="551.0,225.3 566.0,225.8 565.5,240.1 550.5,239.6" fill="#5b5b5b"/>
<polygon points="549.6,263.7 564.6,264.2 564.1,278.5 549.1,278.0" fill="#5b5b5b"/>
<polygon points="632.8,190.2 647.8,190.7 647.3,205.0 632.3,204.5" fill="#5b5b5b"/>
<polygon points="631.4,228.2 646.4,228.7 645.9,243.0 630.9,242.5" fill="#5b5b5b"/>
<polygon points="630.0,266.2 645.0,266.7 644.5,281.0 629.5,280.5" fill="#5b5b5b"/>
<polygon points="627.8,333.3 642.8,333.8 642.3,348.1 627.3,347.6" fill="#5b5b5b"/>
<polygon points="666.2,334.8 681.2,335.3 680.7,349.6 665.7,349.1" fill="#5b5b5b"/>
<polygon points="704.6,335.8 719.6,336.3 719.1,350.6 704.1,350.1" fill="#5b5b5b"/>
<polygon points="743.0,337.3 758.0,337.8 757.5,352.1 742.5,351.6" fill="#5b5b5b"/>
<polygon points="462.6,376.4 476.2,376.9 475.7,390.3 462.1,389.8" fill="#5b5b5b" stroke="#3fe6f2" stroke-width="1.1"/>
<polygon points="500.0,377.8 513.6,378.3 513.1,391.7 499.5,391.2" fill="#5b5b5b" stroke="#3fe6f2" stroke-width="1.1"/>
<polygon points="537.3,378.9 550.9,379.4 550.4,392.8 536.8,392.3" fill="#5b5b5b" stroke="#3fe6f2" stroke-width="1.1"/>
<polygon points="575.2,380.2 588.8,380.7 588.3,394.1 574.7,393.6" fill="#5b5b5b" stroke="#3fe6f2" stroke-width="1.1"/>
<polygon points="460.8,421.3 474.4,421.8 473.9,435.2 460.3,434.7" fill="#5b5b5b" stroke="#3fe6f2" stroke-width="1.1"/>
<polygon points="536.6,416.8 550.2,417.3 549.7,430.7 536.1,430.2" fill="#5b5b5b" stroke="#3fe6f2" stroke-width="1.1"/>
<polygon points="574.3,417.9 587.9,418.4 587.4,431.8 573.8,431.3" fill="#5b5b5b" stroke="#3fe6f2" stroke-width="1.1"/>
<polygon points="535.0,455.0 548.6,455.5 548.1,468.9 534.5,468.4" fill="#5b5b5b" stroke="#3fe6f2" stroke-width="1.1"/>
<polygon points="573.0,456.2 586.6,456.7 586.1,470.1 572.5,469.6" fill="#5b5b5b" stroke="#3fe6f2" stroke-width="1.1"/>
<polygon points="459.2,466.5 472.8,467.0 472.3,480.4 458.7,479.9" fill="#5b5b5b" stroke="#3fe6f2" stroke-width="1.1"/>
<polygon points="457.0,511.7 470.6,512.2 470.1,525.6 456.5,525.1" fill="#5b5b5b" stroke="#3fe6f2" stroke-width="1.1"/>
<polygon points="455.4,557.0 469.0,557.5 468.5,570.9 454.9,570.4" fill="#5b5b5b" stroke="#3fe6f2" stroke-width="1.1"/>
<polygon points="513.6,169.0 780.0,177.6 770.8,429.4 611.3,424.7 608.1,522.5 502.9,518.5 500.0,607.5 431.3,605.0 440.4,349.5 507.6,351.4" fill="none" stroke="#46e8f4" stroke-width="1.3"/>
<polygon points="605.2,379 649,393.3 604,433" fill="none" stroke="#f6ee28" stroke-width="1"/>
<polygon points="605.5,382 637,392.5 604.5,421" fill="#f0e040" fill-opacity="0.3" stroke="#f6ee28" stroke-width="1"/>
<line x1="605.5" y1="391.5" x2="637" y2="392.5" stroke="#f6ee28" stroke-width="1"/>
<line x1="637" y1="392.8" x2="665" y2="393.5" stroke="#d82020" stroke-width="1"/>
<circle cx="665" cy="393.5" r="1.5" fill="#d81818"/>
<polygon points="603.8,372.5 607.2,372.5 605.5,377.5" fill="#1830d8"/>
<line x1="604" y1="433" x2="603.5" y2="447" stroke="#30a030" stroke-width="1"/>
<circle cx="603.4" cy="446.5" r="1.3" fill="#30a030"/>
<text x="604.5" y="372" font-size="4.5" fill="#d8c020" font-family="Liberation Sans, sans-serif">z</text>
<text x="667.5" y="392.5" font-size="4.5" fill="#d8c020" font-family="Liberation Sans, sans-serif">x</text>
<text x="604" y="452" font-size="4.5" fill="#d8c020" font-family="Liberation Sans, sans-serif">y</text>
<polygon points="872,215.7 966.8,218.8 962.4,358.5 867.3,355.4" fill="#b8f0fd" stroke="#5fb6c6" stroke-width="0.8"/>
<polygon points="867.3,355.4 962.4,358.5 960.5,397.1 866.3,394" fill="#000000" stroke="#4f9fb0" stroke-width="0.8"/>
<circle cx="995.5" cy="83.5" r="15" fill="none" stroke="#8b8e93" stroke-width="3.2" opacity="0.9"/>
<circle cx="995.5" cy="83.5" r="13" fill="none" stroke="#5c5f64" stroke-width="1"/>
<polygon points="988.6,71.6 1003.2,72 1003.4,89.2 988,88.4" fill="#9c9c9c"/>
<polygon points="988.6,71.6 1003.2,72 1002.6,74 989.4,73.6" fill="#b4b4b4"/>
<polygon points="988,88.4 1003.4,89.2 1002.8,87 988.8,86.4" fill="#8a8a8a"/>
<text x="995.6" y="81.5" font-size="4.2" fill="#b8b8b8" text-anchor="middle" font-family="Liberation Sans, sans-serif">TOP</text>
<text x="995.8" y="69.6" font-size="5.4" font-weight="bold" fill="#c4c6ca" text-anchor="middle" font-family="Liberation Sans, sans-serif">N</text>
<text x="995.2" y="102.4" font-size="5.4" font-weight="bold" fill="#c4c6ca" text-anchor="middle" font-family="Liberation Sans, sans-serif">S</text>
<text x="979.2" y="85" font-size="5.4" font-weight="bold" fill="#c4c6ca" text-anchor="middle" font-family="Liberation Sans, sans-serif">W</text>
<text x="1012.2" y="85.2" font-size="5.4" font-weight="bold" fill="#c4c6ca" text-anchor="middle" font-family="Liberation Sans, sans-serif">E</text>
<rect x="299.5" y="77" width="66.5" height="19" fill="#3f4042"/>
<rect x="300" y="78" width="2" height="17" fill="#606060"/>
<path d="M310 81.5 L312.4 88 H307.6Z" fill="#36c2c8"/><path d="M319.5 80 L322 86.5 H317Z" fill="#f2ac14"/><path d="M315 82 L317.2 86 H316.2 L318.6 90 H315.8 V93 H314.2 V90 H311.4 L313.8 86 H312.8Z" fill="#ececec"/>
<path d="M327.5 79.5 H338.5 L341.5 82.5 V94.5 H327.5Z" fill="none" stroke="#d8d8d8" stroke-width="1.1"/><path d="M330 84.5 H339" stroke="#f2ac14" stroke-width="1.2"/><path d="M330 87.5 H339 M330 90.3 H339" stroke="#36c2c8" stroke-width="1.2"/>
<circle cx="354.5" cy="87" r="7" fill="none" stroke="#d8d8d8" stroke-width="1.1"/><text x="354.5" y="91" font-size="11" fill="#36c2c8" text-anchor="middle" font-family="Liberation Sans, sans-serif">?</text>
<line x1="170" y1="599.6" x2="182.5" y2="599.6" stroke="#c02020" stroke-width="1.1"/>
<line x1="170.6" y1="592.5" x2="171.4" y2="586.5" stroke="#20a020" stroke-width="1.2"/>
<line x1="170" y1="599.2" x2="171.6" y2="592" stroke="#2030c8" stroke-width="1.7"/>
<text x="182.6" y="600" font-size="4.5" fill="#c02020" font-family="Liberation Sans, sans-serif">x</text>
<text x="171.4" y="587" font-size="4.5" fill="#20a020" font-family="Liberation Sans, sans-serif">y</text>
</svg>
<div class="a" style="left:0px;top:613px;width:1280px;height:16px;background:#444444;"></div>
<div class="a" style="left:1.5px;top:616px;width:1px;height:27px;background:#5a5a5a;"></div>
<div class="a" style="left:6px;top:615.5px;width:9.5px;height:11px;background:#5e5e5e;border-radius:1px;"></div>
<div class="a t" style="top:615.4px;height:12px;line-height:12px;font-size:7px;color:#9a9a9a;left:8px;">&lt;</div>
<div class="a" style="left:16px;top:615.5px;width:76.5px;height:11px;background:#636363;border-radius:1px;"></div>
<div class="a t" style="top:615.7px;height:12px;line-height:12px;font-size:6.45px;color:#e4e4e4;left:-46px;width:200px;text-align:center;">0 / 100</div>
<div class="a" style="left:94px;top:615.5px;width:9px;height:11px;background:#5e5e5e;border-radius:1px;"></div>
<div class="a t" style="top:615.4px;height:12px;line-height:12px;font-size:7px;color:#9a9a9a;left:96px;">&gt;</div>
<div class="a" style="left:4px;top:629px;width:36px;height:16px;background:#3c3c3c;"></div>
<div class="a" style="left:40px;top:629px;width:1210px;height:16px;background:#2b2b2b;"></div>
<svg class="a" style="left:0;top:629px" width="1280" height="16" viewBox="0 0 1280 16"><line x1="41.5" y1="-2" x2="41.5" y2="7.5" stroke="#5a5a5a" stroke-width="0.8"/><line x1="53.5" y1="-2" x2="53.5" y2="7.5" stroke="#5a5a5a" stroke-width="0.8"/><line x1="65.5" y1="-2" x2="65.5" y2="7.5" stroke="#5a5a5a" stroke-width="0.8"/><line x1="77.6" y1="-2" x2="77.6" y2="7.5" stroke="#5a5a5a" stroke-width="0.8"/><line x1="89.6" y1="-2" x2="89.6" y2="7.5" stroke="#5a5a5a" stroke-width="0.8"/><line x1="101.6" y1="-2" x2="101.6" y2="7.5" stroke="#5a5a5a" stroke-width="0.8"/><line x1="113.6" y1="-2" x2="113.6" y2="7.5" stroke="#5a5a5a" stroke-width="0.8"/><line x1="125.6" y1="-2" x2="125.6" y2="7.5" stroke="#5a5a5a" stroke-width="0.8"/><line x1="137.7" y1="-2" x2="137.7" y2="7.5" stroke="#5a5a5a" stroke-width="0.8"/><line x1="149.7" y1="-2" x2="149.7" y2="7.5" stroke="#5a5a5a" stroke-width="0.8"/><line x1="161.7" y1="-2" x2="161.7" y2="7.5" stroke="#5a5a5a" stroke-width="0.8"/><line x1="173.7" y1="-2" x2="173.7" y2="7.5" stroke="#5a5a5a" stroke-width="0.8"/><line x1="185.7" y1="-2" x2="185.7" y2="7.5" stroke="#5a5a5a" stroke-width="0.8"/><line x1="197.8" y1="-2" x2="197.8" y2="7.5" stroke="#5a5a5a" stroke-width="0.8"/><line x1="209.8" y1="-2" x2="209.8" y2="7.5" stroke="#5a5a5a" stroke-width="0.8"/><line x1="221.8" y1="-2" x2="221.8" y2="7.5" stroke="#5a5a5a" stroke-width="0.8"/><line x1="233.8" y1="-2" x2="233.8" y2="7.5" stroke="#5a5a5a" stroke-width="0.8"/><line x1="245.8" y1="-2" x2="245.8" y2="7.5" stroke="#5a5a5a" stroke-width="0.8"/><line x1="257.9" y1="-2" x2="257.9" y2="7.5" stroke="#5a5a5a" stroke-width="0.8"/><line x1="269.9" y1="-2" x2="269.9" y2="7.5" stroke="#5a5a5a" stroke-width="0.8"/><line x1="281.9" y1="-2" x2="281.9" y2="7.5" stroke="#5a5a5a" stroke-width="0.8"/><line x1="293.9" y1="-2" x2="293.9" y2="7.5" stroke="#5a5a5a" stroke-width="0.8"/><line x1="305.9" y1="-2" x2="305.9" y2="7.5" stroke="#5a5a5a" stroke-width="0.8"/><line x1="318.0" y1="-2" x2="318.0" y2="7.5" stroke="#5a5a5a" stroke-width="0.8"/><line x1="330.0" y1="-2" x2="330.0" y2="7.5" stroke="#5a5a5a" stroke-width="0.8"/><line x1="342.0" y1="-2" x2="342.0" y2="7.5" stroke="#5a5a5a" stroke-width="0.8"/><line x1="354.0" y1="-2" x2="354.0" y2="7.5" stroke="#5a5a5a" stroke-width="0.8"/><line x1="366.0" y1="-2" x2="366.0" y2="7.5" stroke="#5a5a5a" stroke-width="0.8"/><line x1="378.1" y1="-2" x2="378.1" y2="7.5" stroke="#5a5a5a" stroke-width="0.8"/><line x1="390.1" y1="-2" x2="390.1" y2="7.5" stroke="#5a5a5a" stroke-width="0.8"/><line x1="402.1" y1="-2" x2="402.1" y2="7.5" stroke="#5a5a5a" stroke-width="0.8"/><line x1="414.1" y1="-2" x2="414.1" y2="7.5" stroke="#5a5a5a" stroke-width="0.8"/><line x1="426.1" y1="-2" x2="426.1" y2="7.5" stroke="#5a5a5a" stroke-width="0.8"/><line x1="438.2" y1="-2" x2="438.2" y2="7.5" stroke="#5a5a5a" stroke-width="0.8"/><line x1="450.2" y1="-2" x2="450.2" y2="7.5" stroke="#5a5a5a" stroke-width="0.8"/><line x1="462.2" y1="-2" x2="462.2" y2="7.5" stroke="#5a5a5a" stroke-width="0.8"/><line x1="474.2" y1="-2" x2="474.2" y2="7.5" stroke="#5a5a5a" stroke-width="0.8"/><line x1="486.2" y1="-2" x2="486.2" y2="7.5" stroke="#5a5a5a" stroke-width="0.8"/><line x1="498.3" y1="-2" x2="498.3" y2="7.5" stroke="#5a5a5a" stroke-width="0.8"/><line x1="510.3" y1="-2" x2="510.3" y2="7.5" stroke="#5a5a5a" stroke-width="0.8"/><line x1="522.3" y1="-2" x2="522.3" y2="7.5" stroke="#5a5a5a" stroke-width="0.8"/><line x1="534.3" y1="-2" x2="534.3" y2="7.5" stroke="#5a5a5a" stroke-width="0.8"/><line x1="546.3" y1="-2" x2="546.3" y2="7.5" stroke="#5a5a5a" stroke-width="0.8"/><line x1="558.4" y1="-2" x2="558.4" y2="7.5" stroke="#5a5a5a" stroke-width="0.8"/><line x1="570.4" y1="-2" x2="570.4" y2="7.5" stroke="#5a5a5a" stroke-width="0.8"/><line x1="582.4" y1="-2" x2="582.4" y2="7.5" stroke="#5a5a5a" stroke-width="0.8"/><line x1="594.4" y1="-2" x2="594.4" y2="7.5" stroke="#5a5a5a" stroke-width="0.8"/><line x1="606.4" y1="-2" x2="606.4" y2="7.5" stroke="#5a5a5a" stroke-width="0.8"/><line x1="618.5" y1="-2" x2="618.5" y2="7.5" stroke="#5a5a5a" stroke-width="0.8"/><line x1="630.5" y1="-2" x2="630.5" y2="7.5" stroke="#5a5a5a" stroke-width="0.8"/><line x1="642.5" y1="-2" x2="642.5" y2="7.5" stroke="#5a5a5a" stroke-width="0.8"/><line x1="654.5" y1="-2" x2="654.5" y2="7.5" stroke="#5a5a5a" stroke-width="0.8"/><line x1="666.5" y1="-2" x2="666.5" y2="7.5" stroke="#5a5a5a" stroke-width="0.8"/><line x1="678.6" y1="-2" x2="678.6" y2="7.5" stroke="#5a5a5a" stroke-width="0.8"/><line x1="690.6" y1="-2" x2="690.6" y2="7.5" stroke="#5a5a5a" stroke-width="0.8"/><line x1="702.6" y1="-2" x2="702.6" y2="7.5" stroke="#5a5a5a" stroke-width="0.8"/><line x1="714.6" y1="-2" x2="714.6" y2="7.5" stroke="#5a5a5a" stroke-width="0.8"/><line x1="726.6" y1="-2" x2="726.6" y2="7.5" stroke="#5a5a5a" stroke-width="0.8"/><line x1="738.7" y1="-2" x2="738.7" y2="7.5" stroke="#5a5a5a" stroke-width="0.8"/><line x1="750.7" y1="-2" x2="750.7" y2="7.5" stroke="#5a5a5a" stroke-width="0.8"/><line x1="762.7" y1="-2" x2="762.7" y2="7.5" stroke="#5a5a5a" stroke-width="0.8"/><line x1="774.7" y1="-2" x2="774.7" y2="7.5" stroke="#5a5a5a" stroke-width="0.8"/><line x1="786.7" y1="-2" x2="786.7" y2="7.5" stroke="#5a5a5a" stroke-width="0.8"/><line x1="798.8" y1="-2" x2="798.8" y2="7.5" stroke="#5a5a5a" stroke-width="0.8"/><line x1="810.8" y1="-2" x2="810.8" y2="7.5" stroke="#5a5a5a" stroke-width="0.8"/><line x1="822.8" y1="-2" x2="822.8" y2="7.5" stroke="#5a5a5a" stroke-width="0.8"/><line x1="834.8" y1="-2" x2="834.8" y2="7.5" stroke="#5a5a5a" stroke-width="0.8"/><line x1="846.8" y1="-2" x2="846.8" y2="7.5" stroke="#5a5a5a" stroke-width="0.8"/><line x1="858.9" y1="-2" x2="858.9" y2="7.5" stroke="#5a5a5a" stroke-width="0.8"/><line x1="870.9" y1="-2" x2="870.9" y2="7.5" stroke="#5a5a5a" stroke-width="0.8"/><line x1="882.9" y1="-2" x2="882.9" y2="7.5" stroke="#5a5a5a" stroke-width="0.8"/><line x1="894.9" y1="-2" x2="894.9" y2="7.5" stroke="#5a5a5a" stroke-width="0.8"/><line x1="906.9" y1="-2" x2="906.9" y2="7.5" stroke="#5a5a5a" stroke-width="0.8"/><line x1="919.0" y1="-2" x2="919.0" y2="7.5" stroke="#5a5a5a" stroke-width="0.8"/><line x1="931.0" y1="-2" x2="931.0" y2="7.5" stroke="#5a5a5a" stroke-width="0.8"/><line x1="943.0" y1="-2" x2="943.0" y2="7.5" stroke="#5a5a5a" stroke-width="0.8"/><line x1="955.0" y1="-2" x2="955.0" y2="7.5" stroke="#5a5a5a" stroke-width="0.8"/><line x1="967.0" y1="-2" x2="967.0" y2="7.5" stroke="#5a5a5a" stroke-width="0.8"/><line x1="979.1" y1="-2" x2="979.1" y2="7.5" stroke="#5a5a5a" stroke-width="0.8"/><line x1="991.1" y1="-2" x2="991.1" y2="7.5" stroke="#5a5a5a" stroke-width="0.8"/><line x1="1003.1" y1="-2" x2="1003.1" y2="7.5" stroke="#5a5a5a" stroke-width="0.8"/><line x1="1015.1" y1="-2" x2="1015.1" y2="7.5" stroke="#5a5a5a" stroke-width="0.8"/><line x1="1027.1" y1="-2" x2="1027.1" y2="7.5" stroke="#5a5a5a" stroke-width="0.8"/><line x1="1039.2" y1="-2" x2="1039.2" y2="7.5" stroke="#5a5a5a" stroke-width="0.8"/><line x1="1051.2" y1="-2" x2="1051.2" y2="7.5" stroke="#5a5a5a" stroke-width="0.8"/><line x1="1063.2" y1="-2" x2="1063.2" y2="7.5" stroke="#5a5a5a" stroke-width="0.8"/><line x1="1075.2" y1="-2" x2="1075.2" y2="7.5" stroke="#5a5a5a" stroke-width="0.8"/><line x1="1087.2" y1="-2" x2="1087.2" y2="7.5" stroke="#5a5a5a" stroke-width="0.8"/><line x1="1099.3" y1="-2" x2="1099.3" y2="7.5" stroke="#5a5a5a" stroke-width="0.8"/><line x1="1111.3" y1="-2" x2="1111.3" y2="7.5" stroke="#5a5a5a" stroke-width="0.8"/><line x1="1123.3" y1="-2" x2="1123.3" y2="7.5" stroke="#5a5a5a" stroke-width="0.8"/><line x1="1135.3" y1="-2" x2="1135.3" y2="7.5" stroke="#5a5a5a" stroke-width="0.8"/><line x1="1147.3" y1="-2" x2="1147.3" y2="7.5" stroke="#5a5a5a" stroke-width="0.8"/><line x1="1159.4" y1="-2" x2="1159.4" y2="7.5" stroke="#5a5a5a" stroke-width="0.8"/><line x1="1171.4" y1="-2" x2="1171.4" y2="7.5" stroke="#5a5a5a" stroke-width="0.8"/><line x1="1183.4" y1="-2" x2="1183.4" y2="7.5" stroke="#5a5a5a" stroke-width="0.8"/><line x1="1195.4" y1="-2" x2="1195.4" y2="7.5" stroke="#5a5a5a" stroke-width="0.8"/><line x1="1207.4" y1="-2" x2="1207.4" y2="7.5" stroke="#5a5a5a" stroke-width="0.8"/><line x1="1219.5" y1="-2" x2="1219.5" y2="7.5" stroke="#5a5a5a" stroke-width="0.8"/><line x1="1231.5" y1="-2" x2="1231.5" y2="7.5" stroke="#5a5a5a" stroke-width="0.8"/><line x1="1243.5" y1="-2" x2="1243.5" y2="7.5" stroke="#5a5a5a" stroke-width="0.8"/><text x="101.6" y="14" font-size="6.6" fill="#d4d4d4" text-anchor="middle" font-family="Liberation Sans, sans-serif">5</text><text x="161.7" y="14" font-size="6.6" fill="#d4d4d4" text-anchor="middle" font-family="Liberation Sans, sans-serif">10</text><text x="221.8" y="14" font-size="6.6" fill="#d4d4d4" text-anchor="middle" font-family="Liberation Sans, sans-serif">15</text><text x="281.9" y="14" font-size="6.6" fill="#d4d4d4" text-anchor="middle" font-family="Liberation Sans, sans-serif">20</text><text x="342.0" y="14" font-size="6.6" fill="#d4d4d4" text-anchor="middle" font-family="Liberation Sans, sans-serif">25</text><text x="402.1" y="14" font-size="6.6" fill="#d4d4d4" text-anchor="middle" font-family="Liberation Sans, sans-serif">30</text><text x="462.2" y="14" font-size="6.6" fill="#d4d4d4" text-anchor="middle" font-family="Liberation Sans, sans-serif">35</text><text x="522.3" y="14" font-size="6.6" fill="#d4d4d4" text-anchor="middle" font-family="Liberation Sans, sans-serif">40</text><text x="582.4" y="14" font-size="6.6" fill="#d4d4d4" text-anchor="middle" font-family="Liberation Sans, sans-serif">45</text><text x="642.5" y="14" font-size="6.6" fill="#d4d4d4" text-anchor="middle" font-family="Liberation Sans, sans-serif">50</text><text x="702.6" y="14" font-size="6.6" fill="#d4d4d4" text-anchor="middle" font-family="Liberation Sans, sans-serif">55</text><text x="762.7" y="14" font-size="6.6" fill="#d4d4d4" text-anchor="middle" font-family="Liberation Sans, sans-serif">60</text><text x="822.8" y="14" font-size="6.6" fill="#d4d4d4" text-anchor="middle" font-family="Liberation Sans, sans-serif">65</text><text x="882.9" y="14" font-size="6.6" fill="#d4d4d4" text-anchor="middle" font-family="Liberation Sans, sans-serif">70</text><text x="943.0" y="14" font-size="6.6" fill="#d4d4d4" text-anchor="middle" font-family="Liberation Sans, sans-serif">75</text><text x="1003.1" y="14" font-size="6.6" fill="#d4d4d4" text-anchor="middle" font-family="Liberation Sans, sans-serif">80</text><text x="1063.2" y="14" font-size="6.6" fill="#d4d4d4" text-anchor="middle" font-family="Liberation Sans, sans-serif">85</text><text x="1123.3" y="14" font-size="6.6" fill="#d4d4d4" text-anchor="middle" font-family="Liberation Sans, sans-serif">90</text><text x="1183.4" y="14" font-size="6.6" fill="#d4d4d4" text-anchor="middle" font-family="Liberation Sans, sans-serif">95</text><text x="1243.5" y="14" font-size="6.6" fill="#d4d4d4" text-anchor="middle" font-family="Liberation Sans, sans-serif">100</text><rect x="40.5" y="1.5" width="3.8" height="13.5" fill="#a89a2a"/><rect x="41.5" y="2" width="1" height="12.5" fill="#c8b838"/><text x="42" y="14" font-size="5.5" fill="#d8d060" text-anchor="middle" font-family="Liberation Sans, sans-serif">0</text><path d="M13.5 5.5v1.2M13.5 8v1.2M13.5 10.5v1.2" stroke="#d8d8d8" stroke-width="1.2"/><path d="M16 9.5 Q18 2.5 20 8 Q21.5 12 23.5 7" fill="none" stroke="#36c2c8" stroke-width="1"/></svg>
<div class="a" style="left:2.5px;top:647.8px;width:61.5px;height:14.5px;background:#e6c7c8;"></div>
<div class="a" style="left:65px;top:647px;width:1px;height:22px;background:#303030;"></div>
<div class="a t" style="top:650.3px;height:12px;line-height:12px;font-size:6.45px;color:#e0e0e0;left:68.5px;">1 Group Selected</div>
<div class="a" style="left:2.5px;top:662.3px;width:92.5px;height:7px;background:#f4f4f4;"></div>
<div class="a" style="left:9px;top:665.5px;width:3px;height:4px;background:#2a9ab0;border-radius:1px;"></div>
<div class="a t" style="top:663.7px;height:12px;line-height:12px;font-size:6.45px;color:#b0b0b0;left:14px;">MAXScript Mi</div>
<div class="a t" style="top:662.9px;height:12px;line-height:12px;font-size:6.45px;color:#9a9a9a;left:98px;">Click or click-and-drag to select objects</div>
<div class="a" style="left:726px;top:648px;width:14.5px;height:14px;background:#5a8fd2;border-radius:2px;"></div>
<svg class="a" style="left:726px;top:648px" width="50" height="14" viewBox="0 0 50 14"><rect x="3.5" y="3.5" width="7.5" height="7" fill="#36c2c8" stroke="#1e5a90" stroke-width="0.8"/><rect x="5.8" y="5.6" width="3" height="2.8" fill="#8af0e8"/><rect x="20" y="6.5" width="6" height="5" rx="0.8" fill="#e8e8e8"/><path d="M21.3 6.5v-1.8a1.7 1.7 0 0 1 3.4 0v1.8" fill="none" stroke="#e8e8e8" stroke-width="1"/><rect x="36.5" y="3.5" width="7" height="7" fill="none" stroke="#f0f0f0" stroke-width="1"/><circle cx="40" cy="7" r="1.4" fill="#f0f0f0"/><path d="M35.5 2.5l2 2M44.5 2.5l-2 2M35.5 11.5l2-2M44.5 11.5l-2-2" stroke="#f0f0f0" stroke-width="0.8"/></svg>
<div class="a t" style="top:649.4px;height:12px;line-height:12px;font-size:6.65px;color:#e0e0e0;left:775.5px;font-weight:bold;">X:</div>
<div class="a" style="left:784px;top:650px;width:40px;height:10.5px;background:#646464;"></div>
<div class="a t" style="top:649.7px;height:12px;line-height:12px;font-size:6.45px;color:#f0f0f0;left:786px;">100,0</div>
<svg class="a" style="left:820.5px;top:651.5px" width="4" height="7"><polygon points="0.3,2.8 3.7,2.8 2,0.4" fill="#e0e0e0"/><polygon points="0.3,4.2 3.7,4.2 2,6.6" fill="#e0e0e0"/></svg>
<div class="a t" style="top:649.4px;height:12px;line-height:12px;font-size:6.65px;color:#e0e0e0;left:827px;font-weight:bold;">Y:</div>
<div class="a" style="left:836px;top:650px;width:34.5px;height:10.5px;background:#565656;"></div>
<div class="a t" style="top:649.7px;height:12px;line-height:12px;font-size:6.45px;color:#808080;left:838px;">100,0</div>
<div class="a t" style="top:649.4px;height:12px;line-height:12px;font-size:6.65px;color:#e0e0e0;left:878.5px;font-weight:bold;">Z:</div>
<div class="a" style="left:887px;top:650px;width:35px;height:10.5px;background:#565656;"></div>
<div class="a t" style="top:649.7px;height:12px;line-height:12px;font-size:6.45px;color:#808080;left:889px;">100,0</div>
<div class="a t" style="top:649.6px;height:12px;line-height:12px;font-size:6.45px;color:#e4e4e4;left:931px;">Grid = 10,0mm</div>
<div class="a" style="left:917px;top:664.8px;width:13.5px;height:6px;background:#5a8fd2;border-radius:2px 2px 0 0;"></div>
<div class="a t" style="top:664.0px;height:12px;line-height:12px;font-size:6.45px;color:#8a8a8a;left:936px;">Add Time Tag</div>
<svg class="a" style="left:998px;top:649px" width="76" height="13" viewBox="0 0 76 13"><g fill="#e8e8e8"><rect x="3" y="3" width="1.2" height="7"/><polygon points="9,3 9,10 5,6.5"/><polygon points="13,3.6 13,9.4 9.5,6.5"/><polygon points="22,3 22,10 17.5,6.5"/><rect x="23.3" y="3" width="1.3" height="7"/><rect x="25.6" y="3" width="1.3" height="7"/><polygon points="33.5,2 33.5,11 41,6.5"/><polygon points="41.5,10.5 41.5,12.5 39.5,12.5" /><rect x="46.5" y="3" width="1.3" height="7"/><rect x="48.8" y="3" width="1.3" height="7"/><polygon points="51.5,3 51.5,10 56,6.5"/><polygon points="61,3.6 61,9.4 64.5,6.5"/><polygon points="64.8,3 64.8,10 69,6.5"/><rect x="69.8" y="3" width="1.2" height="7"/></g></svg>
<div class="a" style="left:1080px;top:648.5px;width:26.5px;height:22px;background:#5e5e5e;border-radius:2px;"></div>
<svg class="a" style="left:1080px;top:648px" width="27" height="22" viewBox="0 0 27 22"><path d="M13 5v14M5.5 12h14" stroke="#f2f2f2" stroke-width="2"/><path d="M15.5 19l4-4" stroke="#36c2c8" stroke-width="1"/><rect x="19" y="13.5" width="2.5" height="2.5" fill="none" stroke="#36c2c8" stroke-width="0.8"/><rect x="14" y="18.5" width="2.5" height="2.5" fill="none" stroke="#36c2c8" stroke-width="0.8"/></svg>
<div class="a" style="left:1109px;top:649.5px;width:29px;height:11.5px;background:#626262;border-radius:1.5px;"></div>
<div class="a t" style="top:649.8px;height:12px;line-height:12px;font-size:6.45px;color:#e2e2e2;left:1023.5px;width:200px;text-align:center;">Auto</div>
<div class="a" style="left:1141px;top:649.5px;width:70.5px;height:11.5px;background:#626262;border-radius:1.5px;"></div>
<div class="a t" style="top:649.4px;height:12px;line-height:12px;font-size:6.45px;color:#e4e4e4;left:1144.5px;">Selected</div>
<svg class="a" style="left:1203px;top:653.5px" width="6" height="4"><polygon points="0,0 5,0 2.5,3.5" fill="#e0e0e0"/></svg>
<div class="a" style="left:1109px;top:664px;width:29px;height:8px;background:#626262;border-radius:1.5px;"></div>
<div class="a t" style="top:662.5px;height:12px;line-height:12px;font-size:6.45px;color:#e2e2e2;left:1023.5px;width:200px;text-align:center;">Set K.</div>
<div class="a" style="left:1156px;top:664px;width:55.5px;height:8px;background:#626262;border-radius:1.5px;"></div>
<div class="a t" style="top:662.5px;height:12px;line-height:12px;font-size:6.45px;color:#e2e2e2;left:1083.75px;width:200px;text-align:center;">Filters...</div>
<svg class="a" style="left:1142px;top:663px" width="10" height="6" viewBox="0 0 10 6"><path d="M2 6V2.5h6V6M1 2.5h8" stroke="#36c2c8" stroke-width="0.9" fill="none"/></svg>
<div class="a" style="left:1014px;top:665.2px;width:44.5px;height:6px;background:#626262;"></div>
<div class="a t" style="top:664.0px;height:12px;line-height:12px;font-size:6.5px;color:#d8d8d8;left:1016px;">0</div>
<svg class="a" style="left:1000px;top:663px" width="72" height="6" viewBox="0 0 72 6"><path d="M3 6a2 2 0 0 1 4 0M5 2v2" stroke="#e0e0e0" stroke-width="1.1" fill="none"/><circle cx="64.5" cy="5" r="3" fill="#e8e8e8"/><circle cx="67.5" cy="5.5" r="1.5" fill="#f0a818"/></svg>
<svg class="a" style="left:1216px;top:647px" width="62" height="22" viewBox="0 0 62 22"><circle cx="9.5" cy="6.5" r="3" fill="none" stroke="#ececec" stroke-width="1.2"/><path d="M7.3 8.8L4 12.5" stroke="#ececec" stroke-width="1.5"/><circle cx="21" cy="8" r="2.3" fill="none" stroke="#ececec" stroke-width="1"/><path d="M19.4 9.8L17.5 12.5" stroke="#ececec" stroke-width="1.2"/><rect x="23" y="3.5" width="3.2" height="3" fill="#36c2c8"/><rect x="27" y="3.5" width="3.2" height="3" fill="#36c2c8"/><rect x="23" y="7.3" width="3.2" height="3" fill="#36c2c8"/><g transform="translate(-3.5,0)"><path d="M36 5.8L40 3.8l4 2v4.5l-4 2-4-2Z" fill="#36c2c8"/><path d="M33 3.5v-1.2h1.4M47 3.5v-1.2h-1.4M33 11v1.2h1.4M47 11v1.2h-1.4" stroke="#e8e8e8" stroke-width="0.8" fill="none"/></g><g transform="translate(-4.5,0)"><path d="M50.5 6.2L54.5 4.2l4 2v4.5l-4 2-4-2Z" fill="#36c2c8" transform="translate(1,0)"/><path d="M47.5 8.3h4M49 6.8l-1.7 1.5 1.7 1.5" stroke="#e8e8e8" stroke-width="0.9" fill="none"/><rect x="56" y="2" width="3" height="3" fill="#e8e8e8"/><rect x="59.5" y="9.5" width="2.5" height="2.5" fill="#e8e8e8"/></g><path d="M4.5 22v-3.5h2M13 22v-3.5h-2" stroke="#e8e8e8" stroke-width="0.9" fill="none" stroke-dasharray="1.5 1"/><circle cx="9" cy="22" r="2.5" fill="none" stroke="#36c2c8" stroke-width="1"/><path d="M20.5 22v-2.5M22 22v-3.5M23.5 22v-3M25 22v-2" stroke="#e8e8e8" stroke-width="1"/><circle cx="38.5" cy="21" r="3.4" fill="#36c2c8"/><path d="M41 17.5q3 .5 3.5 3" stroke="#e8e8e8" stroke-width="1" fill="none"/><rect x="50" y="17.5" width="8" height="5" fill="none" stroke="#e8e8e8" stroke-width="1"/><polygon points="51,22 57,22 57,18.5" fill="#e8e8e8"/></svg>
<div class="a" style="left:5.5px;top:565.5px;width:13px;height:12.5px;background:#4e4e4e;border-radius:2px;"></div>
<svg class="a" style="left:9.5px;top:568px" width="6" height="8"><polygon points="0.5,0.8 0.5,7 5,3.9" fill="#f0f0f0"/></svg>
<div class="a" style="left:3px;top:585px;width:22px;height:26.7px;background:#3f86d8;border-radius:3px 0 0 3px;"></div>
<div class="a" style="left:5px;top:588.5px;width:18.5px;height:17px;background:linear-gradient(#6f7a8a,#59616d);border:1px solid #8a94a4;border-radius:1px;"></div>
<svg class="a" style="left:31.5px;top:356px" width="8" height="18" viewBox="0 0 8 18"><rect x="1" y="8.5" width="5" height="6" rx="1" fill="#f0f0f0"/><rect x="2.5" y="10.2" width="2" height="2.4" fill="#555"/><circle cx="3.5" cy="4" r="0.8" fill="#e8e8e8"/></svg>
<div class="a" style="left:1028px;top:80px;width:110px;height:11px;background:#656565;"></div>
<div class="a t" style="top:80.1px;height:12px;line-height:12px;font-size:6.8px;color:#e6e6e6;left:1031px;font-weight:bold;">Group43697</div>
<div class="a" style="left:1142px;top:80px;width:10.2px;height:11px;background:#f0c9c9;"></div>
<div class="a" style="left:1028px;top:97.5px;width:125px;height:11px;background:#626262;"></div>
<div class="a t" style="top:97.7px;height:12px;line-height:12px;font-size:6.45px;color:#e6e6e6;left:1030px;">Modifier List</div>
<svg class="a" style="left:1144px;top:101px" width="6" height="4"><polygon points="0,0 5,0 2.5,3.5" fill="#e0e0e0"/></svg>
<div class="a" style="left:1029px;top:117.0px;width:60px;height:10.5px;background:#646464;border-radius:1.5px;"></div>
<div class="a t" style="top:116.8px;height:12px;line-height:12px;font-size:6.45px;color:#e2e2e2;left:959.0px;width:200px;text-align:center;">Edit Poly</div>
<div class="a" style="left:1092px;top:117.0px;width:60px;height:10.5px;background:#585858;border-radius:1.5px;"></div>
<div class="a t" style="top:116.8px;height:12px;line-height:12px;font-size:6.45px;color:#858585;left:1022.0px;width:200px;text-align:center;">Edit Spline</div>
<div class="a" style="left:1029px;top:131.05px;width:60px;height:10.5px;background:#646464;border-radius:1.5px;"></div>
<div class="a t" style="top:130.9px;height:12px;line-height:12px;font-size:6.45px;color:#e2e2e2;left:959.0px;width:200px;text-align:center;">Shell</div>
<div class="a" style="left:1092px;top:131.05px;width:60px;height:10.5px;background:#585858;border-radius:1.5px;"></div>
<div class="a t" style="top:130.9px;height:12px;line-height:12px;font-size:6.45px;color:#858585;left:1022.0px;width:200px;text-align:center;">Extrude</div>
<div class="a" style="left:1029px;top:145.1px;width:60px;height:10.5px;background:#585858;border-radius:1.5px;"></div>
<div class="a t" style="top:144.9px;height:12px;line-height:12px;font-size:6.45px;color:#858585;left:959.0px;width:200px;text-align:center;">Sweep</div>
<div class="a" style="left:1092px;top:145.1px;width:60px;height:10.5px;background:#646464;border-radius:1.5px;"></div>
<div class="a t" style="top:144.9px;height:12px;line-height:12px;font-size:6.45px;color:#e2e2e2;left:1022.0px;width:200px;text-align:center;">Symmetry</div>
<div class="a" style="left:1029px;top:159.15px;width:60px;height:10.5px;background:#646464;border-radius:1.5px;"></div>
<div class="a t" style="top:159.0px;height:12px;line-height:12px;font-size:6.45px;color:#e2e2e2;left:959.0px;width:200px;text-align:center;">Clone</div>
<div class="a" style="left:1092px;top:159.15px;width:60px;height:10.5px;background:#646464;border-radius:1.5px;"></div>
<div class="a t" style="top:159.0px;height:12px;line-height:12px;font-size:6.45px;color:#e2e2e2;left:1022.0px;width:200px;text-align:center;">XForm</div>
<div class="a" style="left:1029px;top:173.2px;width:60px;height:10.5px;background:#646464;border-radius:1.5px;"></div>
<div class="a t" style="top:173.0px;height:12px;line-height:12px;font-size:6.45px;color:#e2e2e2;left:959.0px;width:200px;text-align:center;">Slice</div>
<div class="a" style="left:1092px;top:173.2px;width:60px;height:10.5px;background:#646464;border-radius:1.5px;"></div>
<div class="a t" style="top:173.0px;height:12px;line-height:12px;font-size:6.45px;color:#e2e2e2;left:1022.0px;width:200px;text-align:center;">UVW Map</div>
<div class="a" style="left:1029px;top:187.25px;width:60px;height:10.5px;background:#646464;border-radius:1.5px;"></div>
<div class="a t" style="top:187.1px;height:12px;line-height:12px;font-size:6.45px;color:#e2e2e2;left:959.0px;width:200px;text-align:center;">Unwrap UVW</div>
<div class="a" style="left:1092px;top:187.25px;width:60px;height:10.5px;background:#646464;border-radius:1.5px;"></div>
<div class="a t" style="top:187.1px;height:12px;line-height:12px;font-size:6.45px;color:#e2e2e2;left:1022.0px;width:200px;text-align:center;">TurboSmooth</div>
<div class="a" style="left:1028px;top:202px;width:124.7px;height:64px;background:#444444;border:1px solid #e8e8e8;"></div>
<div class="a" style="left:1053px;top:203px;width:98.7px;height:10px;background:#5a8fd2;"></div>
<div class="a" style="left:1029px;top:213px;width:122.7px;height:0.8px;background:#7a7a7a;"></div>
<div class="a" style="left:1029px;top:223px;width:122.7px;height:0.8px;background:#6a6a6a;"></div>
<div class="a t" style="top:202.4px;height:12px;line-height:12px;font-size:6.45px;color:#ffffff;left:1053.5px;">Edit Poly</div>
<div class="a t" style="top:212.7px;height:12px;line-height:12px;font-size:6.45px;color:#e2e2e2;left:1041.5px;">Editable Poly</div>
<svg class="a" style="left:1030px;top:204px" width="24" height="20" viewBox="0 0 24 20"><path d="M1.5 4.2 Q5.5 0.8 9.5 4.2 Q5.5 7.6 1.5 4.2Z" fill="none" stroke="#f0f0f0" stroke-width="0.9"/><circle cx="5.5" cy="4.2" r="1.4" fill="#f0f0f0"/><polygon points="15,2.6 15,6 17.6,4.3" fill="#f0f0f0"/><polygon points="3.4,12.7 3.4,16.1 6,14.4" fill="#f0f0f0"/></svg>
<div class="a" style="left:1049px;top:269px;width:15px;height:14px;background:#5a8fd2;border-radius:2px;"></div>
<svg class="a" style="left:1028px;top:268px" width="96" height="16" viewBox="0 0 96 16"><path d="M5.5 10.5 L3 13.2 M5 7.5 L8.8 11 M6 8.3 L9.8 4.5 L11.8 6.5 L8 10.2Z" stroke="#d8d8d8" stroke-width="1.1" fill="#d8d8d8"/><rect x="26.8" y="2.5" width="4" height="11" fill="#2c9aa0" stroke="#e0e0e0" stroke-width="0.8"/><line x1="19.5" y1="3" x2="19.5" y2="13" stroke="#2e2e2e"/><line x1="40.5" y1="3" x2="40.5" y2="13" stroke="#2e2e2e"/><line x1="76.5" y1="3" x2="76.5" y2="13" stroke="#2e2e2e"/><circle cx="46.5" cy="6" r="2.8" fill="#565656"/><circle cx="51.5" cy="9.5" r="3.2" fill="#525252"/><rect x="45" y="9" width="4" height="4" fill="#505050"/><path d="M61.5 4.2h6.4 M63.6 4v-1.3h2.3V4 M62.2 5.6h5.2l-.5 7.6h-4.2Z M63.9 6.8v5 M65.8 6.8v5" fill="none" stroke="#ececec" stroke-width="0.9"/><rect x="81.5" y="3.5" width="8" height="9.5" fill="#8a8a8a" stroke="#e0e0e0" stroke-width="0.8"/><path d="M82 6.5h7M82 9.5h7M84.5 4v9M87 4v9" stroke="#3c3c3c" stroke-width="0.7"/><path d="M86 9.5 L91.5 2.5" stroke="#f0a818" stroke-width="1.5"/></svg>
<div class="a" style="left:1031.5px;top:292.5px;width:118px;height:1px;background:#545454;"></div>
<div class="a" style="left:1086px;top:292px;width:7px;height:2px;background:#7a7a7a;border-radius:1px;"></div>
<div class="a" style="left:1028px;top:297px;width:120px;height:79px;background:#515151;border-radius:2px;"></div>
<svg class="a" style="left:1030.8px;top:300.8px" width="6" height="5"><polygon points="0,0.3 4.6,0.3 2.3,3.6" fill="#d0d0d0"/></svg>
<div class="a t" style="top:296.9px;height:12px;line-height:12px;font-size:6.65px;color:#ffffff;left:1038.6px;font-weight:bold;">Edit Poly Mode</div>
<div class="a" style="left:1140px;top:301px;width:3.5px;height:3.5px;background:#666666;"></div>
<div class="a" style="left:1042.7px;top:313.7px;width:5.6px;height:5.6px;border-radius:50%;background:radial-gradient(#ffffff 45%,#bdbdbd);"></div>
<div class="a t" style="top:310.9px;height:12px;line-height:12px;font-size:6.45px;color:#e4e4e4;left:1053px;">Model</div>
<div class="a" style="left:1091.5px;top:313.5px;width:6px;height:6px;border-radius:50%;background:#626262;"></div>
<div class="a t" style="top:310.9px;height:12px;line-height:12px;font-size:6.45px;color:#e4e4e4;left:1102px;">Animate</div>
<div class="a t" style="top:322.2px;height:12px;line-height:12px;font-size:6.45px;color:#e4e4e4;left:987px;width:200px;text-align:center;">&lt;No Current Operation&gt;</div>
<div class="a" style="left:1066px;top:335px;width:41.5px;height:10px;background:#585858;border-radius:1.5px;"></div>
<div class="a t" style="top:334.5px;height:12px;line-height:12px;font-size:6.45px;color:#858585;left:986.75px;width:200px;text-align:center;">Commit</div>
<div class="a" style="left:1042px;top:350px;width:42px;height:10px;background:#585858;border-radius:1.5px;"></div>
<div class="a t" style="top:349.5px;height:12px;line-height:12px;font-size:6.45px;color:#858585;left:963.0px;width:200px;text-align:center;">Settings</div>
<div class="a" style="left:1091px;top:350px;width:41.5px;height:10px;background:#585858;border-radius:1.5px;"></div>
<div class="a t" style="top:349.5px;height:12px;line-height:12px;font-size:6.45px;color:#858585;left:1011.75px;width:200px;text-align:center;">Cancel</div>
<div class="a" style="left:1040.7px;top:364.7px;width:5.6px;height:5.6px;background:#5b5b5b;border-radius:1px;"></div>
<div class="a t" style="top:361.9px;height:12px;line-height:12px;font-size:6.45px;color:#858585;left:1049px;">Show Cage</div>
<div class="a" style="left:1109px;top:363px;width:9.5px;height:9px;background:#f2b900;"></div>
<div class="a" style="left:1123px;top:363px;width:9.5px;height:9px;background:#e6e070;"></div>
<div class="a" style="left:1111.5px;top:365.5px;width:4.5px;height:4px;background:#e0aa00;"></div>
<div class="a" style="left:1125.5px;top:365.5px;width:4.5px;height:4px;background:#d6d060;"></div>
<div class="a" style="left:1028px;top:379.7px;width:120px;height:169.3px;background:#515151;border-radius:2px;"></div>
<svg class="a" style="left:1030.8px;top:383.5px" width="6" height="5"><polygon points="0,0.3 4.6,0.3 2.3,3.6" fill="#d0d0d0"/></svg>
<div class="a t" style="top:379.6px;height:12px;line-height:12px;font-size:6.65px;color:#ffffff;left:1038.6px;font-weight:bold;">Selection</div>
<div class="a" style="left:1140px;top:383.7px;width:3.5px;height:3.5px;background:#666666;"></div>
<div class="a" style="left:1045.5px;top:393.5px;width:75px;height:14px;background:#3c3c3c;border-radius:1px;"></div>
<svg class="a" style="left:1045px;top:393px" width="76" height="15" viewBox="0 0 76 15"><g fill="#38c8d0"><circle cx="4" cy="7.5" r="0.9"/><circle cx="9" cy="3.5" r="0.9"/><circle cx="10.5" cy="7.5" r="0.9"/><circle cx="8" cy="11" r="0.9"/><circle cx="5.5" cy="5" r="0.6"/></g><path d="M19 7.8 L26.5 3.8 L25.5 11.5Z" fill="none" stroke="#38c8d0" stroke-width="0.9"/><path d="M35.5 3.2 Q41.5 3.2 41.3 8 Q41 11.8 36 11.8 Q38.8 7.5 35.5 3.2Z" fill="none" stroke="#38c8d0" stroke-width="0.9"/><rect x="49.5" y="4" width="7" height="6.8" fill="#38c8d0"/><path d="M67.8 3 L72 5 V10 L67.8 12.2 L63.6 10 V5Z" fill="#38c8d0"/><path d="M63.6 5 L67.8 7.2 L72 5 M67.8 7.2 V12.2" stroke="#2a6a70" stroke-width="0.7" fill="none"/></svg>
<div class="a" style="left:1040.2px;top:412.59999999999997px;width:5.6px;height:5.6px;background:#5b5b5b;border-radius:1px;"></div>
<div class="a t" style="top:409.8px;height:12px;line-height:12px;font-size:6.45px;color:#858585;left:1048px;">Use Stack Selection</div>
<div class="a" style="left:1040.2px;top:424.8px;width:5.6px;height:5.6px;background:#5b5b5b;border-radius:1px;"></div>
<div class="a t" style="top:422.0px;height:12px;line-height:12px;font-size:6.45px;color:#858585;left:1048px;">By Vertex</div>
<div class="a" style="left:1040.2px;top:436.8px;width:5.6px;height:5.6px;background:#5b5b5b;border-radius:1px;"></div>
<div class="a t" style="top:434.0px;height:12px;line-height:12px;font-size:6.45px;color:#858585;left:1048px;">Ignore Backfacing</div>
<div class="a" style="left:1040.2px;top:448.5px;width:5.6px;height:5.6px;background:#5b5b5b;border-radius:1px;"></div>
<div class="a t" style="top:445.7px;height:12px;line-height:12px;font-size:6.45px;color:#858585;left:1048px;">By Angle:</div>
<div class="a" style="left:1083px;top:446px;width:53px;height:10.5px;background:#585858;border-radius:1px;"></div>
<div class="a t" style="top:445.7px;height:12px;line-height:12px;font-size:6.45px;color:#858585;left:1086px;">45,0</div>
<svg class="a" style="left:1131px;top:447.8px" width="4" height="7"><polygon points="0.3,2.8 3.7,2.8 2,0.4" fill="#8a8a8a"/><polygon points="0.3,4.2 3.7,4.2 2,6.6" fill="#8a8a8a"/></svg>
<div class="a" style="left:1039px;top:458.5px;width:45px;height:10px;background:#585858;border-radius:1.5px;"></div>
<div class="a t" style="top:458.0px;height:12px;line-height:12px;font-size:6.45px;color:#858585;left:961.5px;width:200px;text-align:center;">Shrink</div>
<div class="a" style="left:1089px;top:458.5px;width:47px;height:10px;background:#585858;border-radius:1.5px;"></div>
<div class="a t" style="top:458.0px;height:12px;line-height:12px;font-size:6.45px;color:#858585;left:1012.5px;width:200px;text-align:center;">Grow</div>
<div class="a" style="left:1039px;top:472.5px;width:38px;height:10px;background:#585858;border-radius:1.5px;"></div>
<div class="a t" style="top:472.0px;height:12px;line-height:12px;font-size:6.45px;color:#858585;left:958.0px;width:200px;text-align:center;">Ring</div>
<div class="a" style="left:1079px;top:472.5px;width:7.5px;height:10px;background:#585858;"></div>
<svg class="a" style="left:1080.7px;top:474.0px" width="4" height="7"><polygon points="0.3,2.8 3.7,2.8 2,0.4" fill="#e0e0e0"/><polygon points="0.3,4.2 3.7,4.2 2,6.6" fill="#e0e0e0"/></svg>
<div class="a" style="left:1089px;top:472.5px;width:37px;height:10px;background:#585858;border-radius:1.5px;"></div>
<div class="a t" style="top:472.0px;height:12px;line-height:12px;font-size:6.45px;color:#858585;left:1007.5px;width:200px;text-align:center;">Loop</div>
<div class="a" style="left:1128px;top:472.5px;width:8px;height:10px;background:#585858;"></div>
<svg class="a" style="left:1130px;top:474.0px" width="4" height="7"><polygon points="0.3,2.8 3.7,2.8 2,0.4" fill="#e0e0e0"/><polygon points="0.3,4.2 3.7,4.2 2,6.6" fill="#e0e0e0"/></svg>
<div class="a" style="left:1039px;top:486.5px;width:97px;height:10px;background:#585858;border-radius:1.5px;"></div>
<div class="a t" style="top:486.0px;height:12px;line-height:12px;font-size:6.45px;color:#858585;left:987.5px;width:200px;text-align:center;">Get Stack Selection</div>
<div class="a" style="left:1033px;top:503.5px;width:105px;height:19px;border:1px solid #474747;border-radius:2px;"></div>
<div class="a" style="left:1036px;top:499px;width:52px;height:8px;background:#515151;"></div>
<div class="a t" style="top:497.9px;height:12px;line-height:12px;font-size:6.45px;color:#e4e4e4;left:1037.5px;">Preview Selection</div>
<div class="a" style="left:1035.7px;top:512.7px;width:5.6px;height:5.6px;border-radius:50%;background:radial-gradient(#ffffff 45%,#bdbdbd);"></div>
<div class="a t" style="top:509.9px;height:12px;line-height:12px;font-size:6.45px;color:#e4e4e4;left:1046px;">Off</div>
<div class="a" style="left:1068.5px;top:512.5px;width:6px;height:6px;border-radius:50%;background:#595959;"></div>
<div class="a t" style="top:509.9px;height:12px;line-height:12px;font-size:6.45px;color:#858585;left:1079px;">SubObj</div>
<div class="a" style="left:1109px;top:512.5px;width:6px;height:6px;border-radius:50%;background:#595959;"></div>
<div class="a t" style="top:509.9px;height:12px;line-height:12px;font-size:6.45px;color:#858585;left:1120px;">Multi</div>
<div class="a t" style="top:525.0px;height:12px;line-height:12px;font-size:6.45px;color:#e4e4e4;left:835.5px;width:300px;text-align:right;">Whole Object Selected</div>
<div class="a" style="left:1028px;top:552px;width:120px;height:11.5px;background:#515151;border-radius:2px;"></div>
<svg class="a" style="left:1031.4px;top:555.2px" width="6" height="6"><polygon points="0.3,0 0.3,4.6 3.4,2.3" fill="#d0d0d0"/></svg>
<div class="a t" style="top:551.9px;height:12px;line-height:12px;font-size:6.65px;color:#ffffff;left:1038.6px;font-weight:bold;">Soft Selection</div>
<div class="a" style="left:1140px;top:556px;width:3.5px;height:3.5px;background:#666666;"></div>
<div class="a" style="left:1147.3px;top:295px;width:3px;height:317px;background:#484848;"></div>
<div class="a" style="left:1150.3px;top:295px;width:3px;height:317px;background:#3e3e3e;"></div>
<div class="a" style="left:1155px;top:77.3px;width:118px;height:273px;background:#515151;border-radius:2px;"></div>
<svg class="a" style="left:1157.8px;top:81.1px" width="6" height="5"><polygon points="0,0.3 4.6,0.3 2.3,3.6" fill="#d0d0d0"/></svg>
<div class="a t" style="top:77.2px;height:12px;line-height:12px;font-size:6.65px;color:#ffffff;left:1165.6px;font-weight:bold;">Edit Geometry</div>
<div class="a" style="left:1265px;top:81.3px;width:3.5px;height:3.5px;background:#666666;"></div>
<div class="a" style="left:1164px;top:92px;width:98px;height:10.5px;background:#646464;border-radius:1.5px;"></div>
<div class="a t" style="top:91.8px;height:12px;line-height:12px;font-size:6.45px;color:#e2e2e2;left:1113.0px;width:200px;text-align:center;">Repeat Last</div>
<div class="a" style="left:1163px;top:107px;width:100.5px;height:29.5px;border:1px solid #474747;border-radius:2px;"></div>
<div class="a" style="left:1165.5px;top:102.5px;width:39px;height:8px;background:#515151;"></div>
<div class="a t" style="top:101.2px;height:12px;line-height:12px;font-size:6.45px;color:#e4e4e4;left:1166.5px;">Constraints</div>
<div class="a" style="left:1169.5px;top:114.9px;width:5.6px;height:5.6px;border-radius:50%;background:radial-gradient(#ffffff 45%,#bdbdbd);"></div>
<div class="a t" style="top:112.1px;height:12px;line-height:12px;font-size:6.45px;color:#e4e4e4;left:1180px;">None</div>
<div class="a" style="left:1209.3px;top:114.7px;width:6px;height:6px;border-radius:50%;background:#626262;"></div>
<div class="a t" style="top:112.1px;height:12px;line-height:12px;font-size:6.45px;color:#e4e4e4;left:1220px;">Edge</div>
<div class="a" style="left:1169.3px;top:125.6px;width:6px;height:6px;border-radius:50%;background:#626262;"></div>
<div class="a t" style="top:123.0px;height:12px;line-height:12px;font-size:6.45px;color:#e4e4e4;left:1180px;">Face</div>
<div class="a" style="left:1209.3px;top:125.6px;width:6px;height:6px;border-radius:50%;background:#626262;"></div>
<div class="a t" style="top:123.0px;height:12px;line-height:12px;font-size:6.45px;color:#e4e4e4;left:1220px;">Normal</div>
<div class="a" style="left:1170.7px;top:143.7px;width:5.6px;height:5.6px;background:#646464;border-radius:1px;"></div>
<div class="a t" style="top:140.9px;height:12px;line-height:12px;font-size:6.45px;color:#e4e4e4;left:1179px;">Preserve UVs</div>
<div class="a" style="left:1231.8px;top:141.3px;width:9px;height:10px;background:#3a3a3a;border-radius:1px;"></div>
<svg class="a" style="left:1233.3px;top:143.10000000000002px" width="6" height="7"><rect x="0.5" y="0.5" width="5" height="5.6" fill="none" stroke="#ececec" stroke-width="0.9"/><rect x="0.5" y="0.5" width="5" height="1.8" fill="#ececec"/></svg>
<div class="a" style="left:1164px;top:155.2px;width:46.5px;height:10.5px;background:#646464;border-radius:1.5px;"></div>
<div class="a t" style="top:155.0px;height:12px;line-height:12px;font-size:6.45px;color:#e2e2e2;left:1087.25px;width:200px;text-align:center;">Create</div>
<div class="a" style="left:1215px;top:155.2px;width:47px;height:10.5px;background:#585858;border-radius:1.5px;"></div>
<div class="a t" style="top:155.0px;height:12px;line-height:12px;font-size:6.45px;color:#858585;left:1138.5px;width:200px;text-align:center;">Collapse</div>
<div class="a" style="left:1164px;top:169.2px;width:36.5px;height:10.5px;background:#646464;border-radius:1.5px;"></div>
<div class="a t" style="top:169.0px;height:12px;line-height:12px;font-size:6.45px;color:#e2e2e2;left:1082.25px;width:200px;text-align:center;">Attach</div>
<div class="a" style="left:1201.5px;top:169.3px;width:9px;height:10px;background:#3a3a3a;border-radius:1px;"></div>
<svg class="a" style="left:1203px;top:171.10000000000002px" width="6" height="7"><rect x="0.5" y="0.5" width="5" height="5.6" fill="none" stroke="#ececec" stroke-width="0.9"/><rect x="0.5" y="0.5" width="5" height="1.8" fill="#ececec"/></svg>
<div class="a" style="left:1215px;top:169.2px;width:36.5px;height:10.5px;background:#585858;border-radius:1.5px;"></div>
<div class="a t" style="top:169.0px;height:12px;line-height:12px;font-size:6.45px;color:#858585;left:1133.25px;width:200px;text-align:center;">Detach</div>
<svg class="a" style="left:1254.3px;top:171.10000000000002px" width="6" height="7"><rect x="0.5" y="0.5" width="5" height="5.6" fill="none" stroke="#808080" stroke-width="0.9"/><rect x="0.5" y="0.5" width="5" height="1.8" fill="#808080"/></svg>
<div class="a" style="left:1163px;top:183px;width:100.5px;height:43.5px;border:1px solid #474747;border-radius:2px;"></div>
<div class="a" style="left:1166px;top:186px;width:45px;height:10.2px;background:#585858;border-radius:1.5px;"></div>
<div class="a t" style="top:185.7px;height:12px;line-height:12px;font-size:6.45px;color:#858585;left:1088.5px;width:200px;text-align:center;">Slice Plane</div>
<div class="a" style="left:1214.7px;top:188.39999999999998px;width:5.6px;height:5.6px;background:#5b5b5b;border-radius:1px;"></div>
<div class="a t" style="top:185.6px;height:12px;line-height:12px;font-size:6.45px;color:#e4e4e4;left:1222.5px;">Split</div>
<div class="a" style="left:1166px;top:200.2px;width:45px;height:10.2px;background:#585858;border-radius:1.5px;"></div>
<div class="a t" style="top:199.8px;height:12px;line-height:12px;font-size:6.45px;color:#858585;left:1088.5px;width:200px;text-align:center;">Slice</div>
<div class="a" style="left:1215px;top:200.2px;width:45px;height:10.2px;background:#585858;border-radius:1.5px;"></div>
<div class="a t" style="top:199.8px;height:12px;line-height:12px;font-size:6.45px;color:#858585;left:1137.5px;width:200px;text-align:center;">Reset Plane</div>
<div class="a" style="left:1166px;top:214.3px;width:45px;height:10.2px;background:#646464;border-radius:1.5px;"></div>
<div class="a t" style="top:214.0px;height:12px;line-height:12px;font-size:6.45px;color:#e2e2e2;left:1088.5px;width:200px;text-align:center;">QuickSlice</div>
<div class="a" style="left:1215px;top:214.3px;width:45px;height:10.2px;background:#646464;border-radius:1.5px;"></div>
<div class="a t" style="top:214.0px;height:12px;line-height:12px;font-size:6.45px;color:#e2e2e2;left:1137.5px;width:200px;text-align:center;">Cut</div>
<div class="a" style="left:1164px;top:231px;width:36.5px;height:10.5px;background:#646464;border-radius:1.5px;"></div>
<div class="a t" style="top:230.8px;height:12px;line-height:12px;font-size:6.45px;color:#e2e2e2;left:1082.25px;width:200px;text-align:center;">MSmooth</div>
<div class="a" style="left:1201.5px;top:231.2px;width:9px;height:10px;background:#3a3a3a;border-radius:1px;"></div>
<svg class="a" style="left:1203px;top:233.0px" width="6" height="7"><rect x="0.5" y="0.5" width="5" height="5.6" fill="none" stroke="#ececec" stroke-width="0.9"/><rect x="0.5" y="0.5" width="5" height="1.8" fill="#ececec"/></svg>
<div class="a" style="left:1215px;top:231px;width:36.5px;height:10.5px;background:#646464;border-radius:1.5px;"></div>
<div class="a t" style="top:230.8px;height:12px;line-height:12px;font-size:6.45px;color:#e2e2e2;left:1133.25px;width:200px;text-align:center;">Tessellate</div>
<div class="a" style="left:1252.8px;top:231.2px;width:9px;height:10px;background:#3a3a3a;border-radius:1px;"></div>
<svg class="a" style="left:1254.3px;top:233.0px" width="6" height="7"><rect x="0.5" y="0.5" width="5" height="5.6" fill="none" stroke="#ececec" stroke-width="0.9"/><rect x="0.5" y="0.5" width="5" height="1.8" fill="#ececec"/></svg>
<div class="a" style="left:1164px;top:245px;width:55.5px;height:10.5px;background:#646464;border-radius:1.5px;"></div>
<div class="a t" style="top:244.8px;height:12px;line-height:12px;font-size:6.45px;color:#e2e2e2;left:1091.75px;width:200px;text-align:center;">Make Planar</div>
<div class="a" style="left:1224px;top:245px;width:10.5px;height:10.5px;background:#646464;border-radius:1.5px;"></div>
<div class="a t" style="top:244.8px;height:12px;line-height:12px;font-size:6.45px;color:#e2e2e2;left:1129.25px;width:200px;text-align:center;">X</div>
<div class="a" style="left:1238px;top:245px;width:10.5px;height:10.5px;background:#646464;border-radius:1.5px;"></div>
<div class="a t" style="top:244.8px;height:12px;line-height:12px;font-size:6.45px;color:#e2e2e2;left:1143.25px;width:200px;text-align:center;">Y</div>
<div class="a" style="left:1252px;top:245px;width:10.5px;height:10.5px;background:#646464;border-radius:1.5px;"></div>
<div class="a t" style="top:244.8px;height:12px;line-height:12px;font-size:6.45px;color:#e2e2e2;left:1157.25px;width:200px;text-align:center;">Z</div>
<div class="a" style="left:1164px;top:259.2px;width:46.5px;height:10.5px;background:#646464;border-radius:1.5px;"></div>
<div class="a t" style="top:259.0px;height:12px;line-height:12px;font-size:6.45px;color:#e2e2e2;left:1087.25px;width:200px;text-align:center;">View Align</div>
<div class="a" style="left:1215px;top:259.2px;width:47px;height:10.5px;background:#646464;border-radius:1.5px;"></div>
<div class="a t" style="top:259.0px;height:12px;line-height:12px;font-size:6.45px;color:#e2e2e2;left:1138.5px;width:200px;text-align:center;">Grid Align</div>
<div class="a" style="left:1189px;top:273.2px;width:36.5px;height:10.5px;background:#646464;border-radius:1.5px;"></div>
<div class="a t" style="top:273.0px;height:12px;line-height:12px;font-size:6.45px;color:#e2e2e2;left:1107.25px;width:200px;text-align:center;">Relax</div>
<div class="a" style="left:1226.8px;top:273.4px;width:9px;height:10px;background:#3a3a3a;border-radius:1px;"></div>
<svg class="a" style="left:1228.3px;top:275.2px" width="6" height="7"><rect x="0.5" y="0.5" width="5" height="5.6" fill="none" stroke="#ececec" stroke-width="0.9"/><rect x="0.5" y="0.5" width="5" height="1.8" fill="#ececec"/></svg>
<div class="a" style="left:1164px;top:287.2px;width:46.5px;height:10.5px;background:#585858;border-radius:1.5px;"></div>
<div class="a t" style="top:287.0px;height:12px;line-height:12px;font-size:6.45px;color:#858585;left:1087.25px;width:200px;text-align:center;">Hide Selected</div>
<div class="a" style="left:1215px;top:287.2px;width:47px;height:10.5px;background:#585858;border-radius:1.5px;"></div>
<div class="a t" style="top:287.0px;height:12px;line-height:12px;font-size:6.45px;color:#858585;left:1138.5px;width:200px;text-align:center;">Unhide All</div>
<div class="a" style="left:1184px;top:301.2px;width:58.5px;height:10.5px;background:#585858;border-radius:1.5px;"></div>
<div class="a t" style="top:301.0px;height:12px;line-height:12px;font-size:6.45px;color:#858585;left:1113.25px;width:200px;text-align:center;">Hide Unselected</div>
<div class="a t" style="top:311.9px;height:12px;line-height:12px;font-size:6.45px;color:#858585;left:1165.5px;">Named Selections:</div>
<div class="a" style="left:1164px;top:324px;width:46.5px;height:10.5px;background:#585858;border-radius:1.5px;"></div>
<div class="a t" style="top:323.8px;height:12px;line-height:12px;font-size:6.45px;color:#858585;left:1087.25px;width:200px;text-align:center;">Copy</div>
<div class="a" style="left:1215px;top:324px;width:47px;height:10.5px;background:#585858;border-radius:1.5px;"></div>
<div class="a t" style="top:323.8px;height:12px;line-height:12px;font-size:6.45px;color:#858585;left:1138.5px;width:200px;text-align:center;">Paste</div>
<div class="a t" style="top:336.4px;height:12px;line-height:12px;font-size:5.5px;color:#8a8a8a;left:1168px;">&#10004;</div>
<div class="a t" style="top:336.5px;height:12px;line-height:12px;font-size:6.45px;color:#858585;left:1175px;">Delete Isolated Vertices</div>
<div class="a" style="left:1155px;top:353.7px;width:118px;height:11.5px;background:#515151;border-radius:2px;"></div>
<svg class="a" style="left:1158.4px;top:356.9px" width="6" height="6"><polygon points="0.3,0 0.3,4.6 3.4,2.3" fill="#d0d0d0"/></svg>
<div class="a t" style="top:353.6px;height:12px;line-height:12px;font-size:6.65px;color:#ffffff;left:1165.6px;font-weight:bold;">Paint Deformation</div>
<div class="a" style="left:1265px;top:357.7px;width:3.5px;height:3.5px;background:#666666;"></div>
<svg class="a" style="left:1028px;top:58px" width="122" height="18" viewBox="0 0 122 18"><path d="M8 4v10M3 9h10" stroke="#e6e6e6" stroke-width="1.3"/><rect x="22" y="2" width="13" height="14" fill="#383838"/><rect x="23.8" y="4.5" width="9.2" height="8.5" fill="none" stroke="#36c2c8" stroke-width="1.1"/><path d="M24 13 Q25.5 6 33 4.8" fill="none" stroke="#e8e8e8" stroke-width="1.1"/><path d="M22.5 3.2h11.5" stroke="#36c2c8" stroke-width="0.9"/><rect x="43.5" y="3.5" width="8.5" height="3.6" fill="#c8c8c8"/><path d="M47.7 7v2.5M43.8 12.5v-3h7.8v3" fill="none" stroke="#36c2c8" stroke-width="0.9"/><circle cx="43.8" cy="13" r="1.4" fill="#36c2c8"/><circle cx="51.6" cy="13" r="1.4" fill="#36c2c8"/><circle cx="66" cy="9" r="4.6" fill="#2b7f86"/><circle cx="70" cy="9" r="4.8" fill="#cfcfcf"/><rect x="83.5" y="4" width="10" height="7" fill="#d0d0d0"/><path d="M88.5 11v2M85.5 13.5h6" stroke="#d0d0d0" stroke-width="1"/><path d="M105.5 6.5 L112 13.6" stroke="#c8c8c8" stroke-width="2" stroke-linecap="round"/><circle cx="104.6" cy="5.4" r="2.7" fill="#c8c8c8"/><polygon points="104.4,5.2 100.5,3.6 103.2,0.8" fill="#444444"/></svg>
</body></html>
